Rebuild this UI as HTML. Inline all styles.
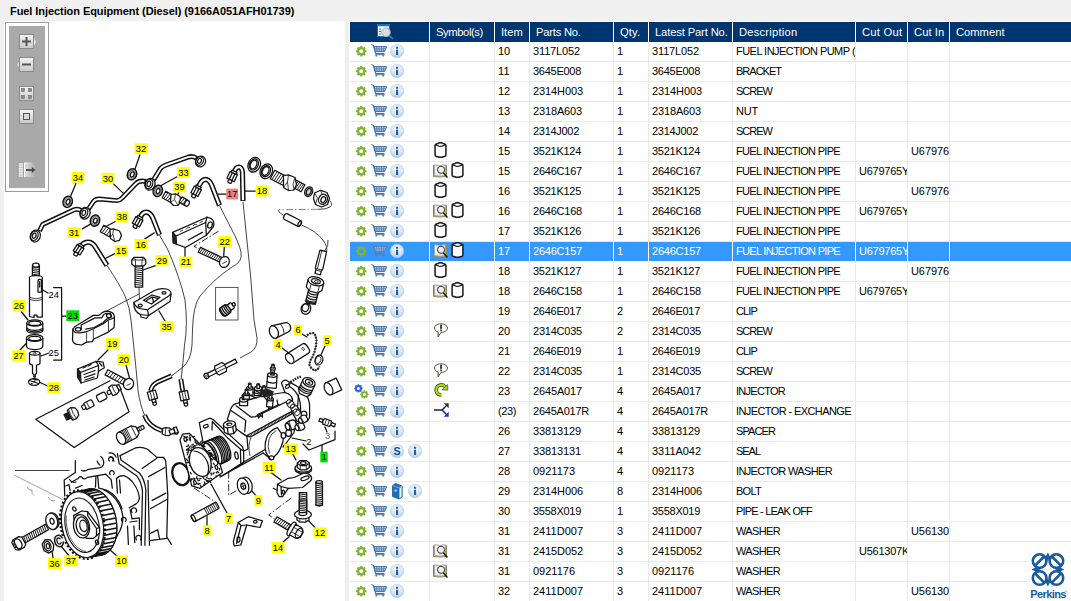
<!DOCTYPE html>
<html><head><meta charset="utf-8"><title>Fuel Injection Equipment (Diesel)</title>
<style>
*{box-sizing:border-box;margin:0;padding:0}
html,body{width:1071px;height:601px;overflow:hidden;background:#f0f0f0;font-family:"Liberation Sans",sans-serif;color:#000}
#title{position:absolute;left:10px;top:4px;font-size:11px;font-weight:bold;line-height:14px;white-space:nowrap;letter-spacing:-0.07px}
#lp{position:absolute;left:4px;top:21px;width:341px;height:580px;background:#fff;overflow:hidden}
#tb{position:absolute;left:1px;top:1px;width:44px;height:170px;border:1px solid #9a9a9a;background:#fff}
#tbi{position:absolute;left:3px;top:3px;width:36px;height:162px;background:#a9a9a9}
#rp{position:absolute;left:349px;top:21px;width:722px;height:580px;background:#fff;overflow:hidden}
#hd{position:absolute;left:350px;top:22px;width:721px;height:20px;background:#fff}
.h{position:absolute;top:0;height:20px;background:#00366f;color:#fff;font-size:11.2px;line-height:20px;padding-left:6px;white-space:nowrap;overflow:hidden}
.r{position:absolute;left:350px;width:721px;height:20px;border-bottom:1px solid #e9e9e9;font-size:11px;line-height:19px}
.c{position:absolute;top:0;height:19px;border-right:1px solid #e9e9e9;overflow:hidden;white-space:nowrap;padding-left:3px}
.c0{left:0;width:80px}.c1{left:80px;width:65px}.c2{left:145px;width:35px}.c3{left:180px;width:84px}.c4{left:264px;width:35px}
.c5{left:299px;width:84px}.c6{left:383px;width:123px}.c7{left:506px;width:52px}.c8{left:558px;width:42px}.c9{left:600px;width:121px;border-right:0}
.r.sel{background:#3399ff;color:#fff;border-bottom-color:#fff}
.r.sel .c{border-right-color:#fff}
.ic{position:absolute;overflow:visible}
.gear{left:6px;top:4px;width:10.500px;height:10.500px}
.gear2{left:4px;top:2px;width:15px;height:15px}
.cart{left:21px;top:2px;width:16px;height:13px}
.info{left:40px;top:2px;width:14px;height:14px}
.info.i2{left:58px}
.book2{left:42px;top:1px;width:11px;height:16px}
.cyl{top:0;width:13px;height:16px;left:4px}
.bk{top:2px;left:3px;width:15px;height:14px}
.bk + .cyl{left:21px}
.nt{top:1px;left:4px;width:14px;height:15px}
.ga{top:1px;left:4px;width:14px;height:14px}
.br{top:1px;left:4px;width:15px;height:14px}
#logo{position:absolute;left:1028px;top:542px;width:43px;height:59px;background:#fff}
</style></head><body>
<svg width="0" height="0" style="position:absolute">
<defs>
<radialGradient id="gi" cx="0.5" cy="0.35" r="0.7"><stop offset="0" stop-color="#f4f9fd"/><stop offset="0.6" stop-color="#d3e4f3"/><stop offset="1" stop-color="#9fc3e3"/></radialGradient>
<symbol id="i-gear" viewBox="0 0 11 11" overflow="visible"><circle cx="5.500" cy="5.500" r="3.200" fill="none" stroke="#7fb32f" stroke-width="2.300"/><g stroke="#7fb32f" stroke-width="2.200"><path d="M5.500 0v11M0 5.500h11M1.600 1.600l7.800 7.800M9.400 1.600l-7.800 7.800" stroke-dasharray="2 7 2 20"/></g></symbol>
<symbol id="i-gear2" viewBox="0 0 15 15" overflow="visible"><g transform="translate(0.300 0.300) scale(0.750)"><circle cx="5.500" cy="5.500" r="3.300" fill="none" stroke="#2a63d4" stroke-width="2.600"/><g stroke="#2a63d4" stroke-width="2.200"><path d="M5.500 0v11M0 5.500h11M1.600 1.600l7.800 7.800M9.400 1.600l-7.800 7.800" stroke-dasharray="2 7 2 20"/></g></g><g transform="translate(6.300 6.300) scale(0.750)"><circle cx="5.500" cy="5.500" r="3.200" fill="none" stroke="#7fb32f" stroke-width="2.300"/><g stroke="#7fb32f" stroke-width="2.200"><path d="M5.500 0v11M0 5.500h11M1.600 1.600l7.800 7.800M9.400 1.600l-7.800 7.800" stroke-dasharray="2 7 2 20"/></g></g></symbol>
<symbol id="i-cart" viewBox="0 0 16 13" overflow="visible"><path d="M0.300 0.600l2 0.700l2.300 8.200h8.800" fill="none" stroke="#3c6ea8" stroke-width="1.100"/><path d="M3 2.600h12.700l-2.200 5h-9z" fill="#dbe6f2" stroke="#3c6ea8" stroke-width="1"/><path d="M5.500 2.600l0.600 5M8 2.600l0.300 5M10.500 2.600v5M13 2.600l-0.800 5M3.500 4.300h11.500M4 6h10" stroke="#3c6ea8" stroke-width="0.700" fill="none"/><circle cx="5.300" cy="11.600" r="1.100" fill="#3f8fe0"/><circle cx="12.300" cy="11.600" r="1.100" fill="#3f8fe0"/><path d="M4.500 10.700h9" stroke="#3c6ea8" stroke-width="0.900"/></symbol>
<symbol id="i-carts" viewBox="0 0 16 13" overflow="visible"><path d="M0.300 0.600l2 0.700l2.300 8.200h8.800" fill="none" stroke="#5b7fa8" stroke-width="1.100"/><path d="M3 2.600h12.700l-2.200 5h-9z" fill="#a9c6e6" stroke="#5b7fa8" stroke-width="1"/><path d="M5.500 2.600l0.600 5M8 2.600l0.300 5M10.500 2.600v5M13 2.600l-0.800 5M3.500 4.300h11.500M4 6h10" stroke="#5b7fa8" stroke-width="0.700" fill="none"/><circle cx="5.300" cy="11.600" r="1.100" fill="#5b7fa8"/><circle cx="12.300" cy="11.600" r="1.100" fill="#5b7fa8"/><path d="M4.500 10.700h9" stroke="#5b7fa8" stroke-width="0.900"/></symbol>
<symbol id="i-info" viewBox="0 0 14 14" overflow="visible"><circle cx="7" cy="7" r="6.700" fill="url(#gi)" stroke="#b5d0ea" stroke-width="0.600"/><rect x="6" y="5.700" width="2.100" height="5.300" fill="#2d5c9e"/><rect x="6" y="2.800" width="2.100" height="2" fill="#2d5c9e"/></symbol>
<symbol id="i-s" viewBox="0 0 14 14" overflow="visible"><circle cx="7" cy="7" r="6.700" fill="url(#gi)" stroke="#b5d0ea" stroke-width="0.600"/><text x="7" y="10.800" font-size="10.500" font-weight="bold" text-anchor="middle" fill="#07529a" font-family="Liberation Sans, sans-serif">S</text></symbol>
<symbol id="i-book2" viewBox="0 0 11 16" overflow="visible"><path d="M0.500 2.500l3-2l6.500 2.500v11l-3 2l-6.500-2.500z" fill="#1f6db5" stroke="#175a9c" stroke-width="0.800"/><path d="M7 5v11l3-2v-11z" fill="#e8f0f8" stroke="#175a9c" stroke-width="0.700"/><path d="M0.500 2.500l6.500 2.500l3-2" fill="none" stroke="#9cc3ea" stroke-width="0.700"/><ellipse cx="3.800" cy="7.500" rx="1.700" ry="1.300" fill="#8bb6e0"/></symbol>
<symbol id="i-cyl" viewBox="0 0 13 16" overflow="visible"><path d="M1.100 3.200q0-0.900 1.300-1.200l1.600-0.400q0.300-0.900 2.500-0.900t2.500 0.900l1.600 0.400q1.300 0.300 1.300 1.200v10q0 0.900-1.300 1.200l-1.600 0.400q-0.600 0.500-2.500 0.500t-2.500-0.500l-1.600-0.400q-1.300-0.300-1.300-1.200z" fill="#fff" stroke="#1a1a1a" stroke-width="1.500"/><path d="M1.500 2.800q1.500 1 2.800 1q0.500 0.600 2.200 0.600t2.200-0.600q1.300 0 2.800-1" fill="none" stroke="#1a1a1a" stroke-width="1.200"/></symbol>
<symbol id="i-bk" viewBox="0 0 15 14" overflow="visible"><path d="M0.500 1.200v11.300l6.500 0.500l6.500-0.500v-11.300" fill="#ececec" stroke="#8f8640" stroke-width="1"/><path d="M1.600 0.800v10.800q3.500-0.300 5.400 1q1.900-1.300 5.400-1v-10.800q-3.500-0.300-5.400 1.200q-1.900-1.500-5.400-1.200z" fill="#f4f4f4" stroke="#8a8a8a" stroke-width="0.800"/><path d="M7 2v10.500" stroke="#aaa" stroke-width="0.600"/><circle cx="8" cy="5.800" r="3.600" fill="#f0f0f0" stroke="#2a2a2a" stroke-width="0.950"/><path d="M10.400 8.700l4 4.800" stroke="#1a1a1a" stroke-width="1.500"/></symbol>
<symbol id="i-nt" viewBox="0 0 14 15" overflow="visible"><path d="M7 0.800c3.600 0 6.400 1.800 6.400 4.300s-2.800 4.200-6.300 4.300l-3 4.400v-4.800c-2-0.600-3.600-2.200-3.600-3.900c0-2.500 2.900-4.300 6.500-4.300z" fill="#fff" stroke="#3a3520" stroke-width="0.900"/><rect x="6.200" y="1.700" width="1.700" height="4.200" fill="#222"/><rect x="6.200" y="6.600" width="1.700" height="1.600" fill="#222"/></symbol>
<symbol id="i-ga" viewBox="0 0 14 14" overflow="visible"><path d="M7.300 11.900a5 5 0 1 1 3.600-8.300" fill="none" stroke="#3c4a12" stroke-width="3.600" stroke-linecap="butt"/><path d="M7.300 11.900a5 5 0 1 1 3.600-8.300" fill="none" stroke="#a4dc16" stroke-width="2.200"/><path d="M8.200 6.900l5.700 0.200l-0.300-5.500z" fill="#a4dc16" stroke="#3c4a12" stroke-width="0.700"/></symbol>
<symbol id="i-br" viewBox="0 0 15 14" overflow="visible"><path d="M0 7h8l4.500-4.500" fill="none" stroke="#1c1c50" stroke-width="1.400"/><path d="M8 7l4.500 4.500" fill="none" stroke="#10208a" stroke-width="1.400"/><path d="M9.800 0.300h4.900v4.900z" fill="#333"/><path d="M14.700 8.800v4.900h-4.900z" fill="#0a32d0"/></symbol>

</defs>
</svg>
<div id="title">Fuel Injection Equipment (Diesel) (9166A051AFH01739)</div>
<div id="lp">
<svg id="dg" width="341" height="580" viewBox="4 21 341 580" style="position:absolute;left:0;top:0" font-family="Liberation Sans, sans-serif">
<style>.l{fill:none;stroke:#111;stroke-width:1.25;stroke-linejoin:round;stroke-linecap:round}.t{fill:none;stroke:#222;stroke-width:0.85}.w{fill:#fff;stroke:#111;stroke-width:1.25;stroke-linejoin:round}.k{fill:#222;stroke:none}.g{fill:none;stroke:#777;stroke-width:0.7}.d{fill:none;stroke:#111;stroke-width:0.9;stroke-dasharray:7 2 1.5 2}</style>
<path class="l" d="M139.9 155.0 L134.3 171.0"/>
<path class="l" d="M75.9 183.5 L69.9 197.9"/>
<path class="l" d="M113.5 183.9 L123.9 193.9"/>
<path class="l" d="M177.8 176.3 L159.8 186.3"/>
<path class="l" d="M178.8 192.3 L176.8 196.9"/>
<path class="l" d="M115.5 221.5 L106.3 226.3"/>
<path class="l" d="M82.3 228.9 L90.9 223.9"/>
<path class="l" d="M144.8 238.9 L154.2 232.9"/>
<path class="l" d="M218.0 194.0 L226.4 194.0"/>
<path class="l" d="M245.0 191.0 L255.5 191.0"/>
<path class="l" d="M48.0 293.0 L41.0 289.0"/>
<path class="l" d="M21.6 312.0 L28.0 320.0"/>
<path class="l" d="M115.0 253.6 L104.0 259.0"/>
<path class="l" d="M155.5 265.6 L143.0 270.0"/>
<path class="l" d="M165.0 321.0 L159.0 311.0"/>
<path class="l" d="M108.0 350.0 L98.0 360.0"/>
<path class="l" d="M20.0 350.0 L27.6 342.0"/>
<path class="l" d="M49.0 353.0 L41.0 356.0"/>
<path class="l" d="M185.0 257.0 L185.0 247.0"/>
<path class="l" d="M224.4 245.6 L223.6 258.0"/>
<path class="l" d="M302.0 334.0 L307.0 337.0"/>
<path class="l" d="M325.0 346.0 L320.0 357.0"/>
<path class="l" d="M282.0 348.0 L290.0 354.0"/>
<path class="l" d="M47.6 386.0 L39.0 382.0"/>
<path class="l" d="M126.0 365.0 L130.0 380.0"/>
<path class="l" d="M306.0 441.0 L292.0 438.0"/>
<path class="l" d="M293.0 454.4 L296.0 460.0"/>
<path class="l" d="M327.0 432.0 L325.0 427.0"/>
<path class="l" d="M53.0 558.0 L51.6 548.0"/>
<path class="l" d="M69.0 555.6 L60.0 545.0"/>
<path class="l" d="M117.0 556.0 L109.0 549.0"/>
<path class="l" d="M271.0 472.4 L281.0 480.0"/>
<path class="l" d="M256.0 495.6 L251.0 490.0"/>
<path class="l" d="M227.0 513.0 L211.0 484.0"/>
<path class="l" d="M207.0 525.6 L207.0 516.0"/>
<path class="l" d="M315.0 527.6 L308.0 520.0"/>
<path class="l" d="M283.0 542.0 L289.0 537.0"/>
<path class="l" d="M53.6 287.6 H61.6 V360 H53.6 M61.6 316 H66.4"/>
<path class="l" d="M303 444 L309 450 L335 439.6 V431 M322 445 V451.6"/>
<path d="M39.5 231 L42.6 224.5 L74 209.800 Q78 208.300 81.500 211" fill="none" stroke="#111" stroke-width="4.9" stroke-linejoin="round" stroke-linecap="butt"/>
<path d="M39.5 231 L42.6 224.5 L74 209.800 Q78 208.300 81.500 211" pathLength="100" stroke-dasharray="0 2 96 2" fill="none" stroke="#fff" stroke-width="1.9" stroke-linejoin="round" stroke-linecap="butt"/>
<path d="M88.200 209.500 L93.500 201.500 Q95.500 199 99.500 199 L117 200.600 Q119.800 200.600 122 198.200 L136 183.500 Q139.500 180 146 181.500" fill="none" stroke="#111" stroke-width="4.9" stroke-linejoin="round" stroke-linecap="butt"/>
<path d="M88.200 209.500 L93.500 201.500 Q95.500 199 99.500 199 L117 200.600 Q119.800 200.600 122 198.200 L136 183.500 Q139.500 180 146 181.500" pathLength="100" stroke-dasharray="0 2 96 2" fill="none" stroke="#fff" stroke-width="1.9" stroke-linejoin="round" stroke-linecap="butt"/>
<path d="M153.500 180 L160.500 168.500 Q162 166.500 166 165 L188 157.200 Q193.500 155.500 196.500 158.500" fill="none" stroke="#111" stroke-width="4.9" stroke-linejoin="round" stroke-linecap="butt"/>
<path d="M153.500 180 L160.500 168.500 Q162 166.500 166 165 L188 157.200 Q193.500 155.500 196.500 158.500" pathLength="100" stroke-dasharray="0 2 96 2" fill="none" stroke="#fff" stroke-width="1.9" stroke-linejoin="round" stroke-linecap="butt"/>
<g transform="translate(35.3 236.1) rotate(20)"><ellipse class="w" rx="5.0" ry="6.0" stroke-width="1.300"/><ellipse class="w" cx="-1" rx="3.6" ry="4.8" stroke-width="1"/><ellipse class="l" cx="-1.2" rx="1.8" ry="2.7" stroke-width="0.800"/></g>
<g transform="translate(85.0 213.2) rotate(20)"><ellipse class="w" rx="5.0" ry="6.0" stroke-width="1.300"/><ellipse class="w" cx="-1" rx="3.6" ry="4.8" stroke-width="1"/><ellipse class="l" cx="-1.2" rx="1.8" ry="2.7" stroke-width="0.800"/></g>
<g transform="translate(150.0 184.3) rotate(20)"><ellipse class="w" rx="5.0" ry="6.0" stroke-width="1.300"/><ellipse class="w" cx="-1" rx="3.6" ry="4.8" stroke-width="1"/><ellipse class="l" cx="-1.2" rx="1.8" ry="2.7" stroke-width="0.800"/></g>
<g transform="translate(200.5 161.5) rotate(30)"><ellipse class="w" rx="5.0" ry="5.5" stroke-width="1.300"/><ellipse class="w" cx="-1" rx="3.6" ry="4.4" stroke-width="1"/><ellipse class="l" cx="-1.2" rx="1.8" ry="2.5" stroke-width="0.800"/></g>
<g transform="translate(132.0 174.3) rotate(20)"><ellipse rx="4.6" ry="5.7" fill="#d4d4d4" stroke="#111" stroke-width="1.500"/><ellipse rx="3.3" ry="4.1" fill="none" stroke="#555" stroke-width="0.700"/><ellipse cx="0.3" rx="1.8" ry="2.6" fill="#fff" stroke="#111" stroke-width="1.300"/></g>
<g transform="translate(67.7 201.8) rotate(20)"><ellipse rx="4.6" ry="5.7" fill="#d4d4d4" stroke="#111" stroke-width="1.500"/><ellipse rx="3.3" ry="4.1" fill="none" stroke="#555" stroke-width="0.700"/><ellipse cx="0.3" rx="1.8" ry="2.6" fill="#fff" stroke="#111" stroke-width="1.300"/></g>
<g transform="translate(157.8 190.9) rotate(20)"><ellipse rx="4.6" ry="5.7" fill="#d4d4d4" stroke="#111" stroke-width="1.500"/><ellipse rx="3.3" ry="4.1" fill="none" stroke="#555" stroke-width="0.700"/><ellipse cx="0.3" rx="1.8" ry="2.6" fill="#fff" stroke="#111" stroke-width="1.300"/></g>
<g transform="translate(95.0 220.6) rotate(20)"><ellipse rx="4.6" ry="5.7" fill="#d4d4d4" stroke="#111" stroke-width="1.500"/><ellipse rx="3.3" ry="4.1" fill="none" stroke="#555" stroke-width="0.700"/><ellipse cx="0.3" rx="1.8" ry="2.6" fill="#fff" stroke="#111" stroke-width="1.300"/></g>
<path class="w" d="M100.2 231.8 L109.2 236.8 L112.8 230.2 L103.8 225.2 Z"/>
<path class="t" style="stroke-width:0.95;stroke:#111" d="M102.0 232.8 L106.5 226.7 M104.2 234.0 L108.8 228.0 M106.5 235.3 L111.0 229.2"/>
<path class="w" d="M110 229.500 L113.500 228.800 L119.500 231 L121.500 235.500 L119.500 240.300 L115 241.500 L110.500 238.500 Z"/>
<path class="t" d="M113.500 228.800 L112.800 234 L115 241.500 M112.800 234 L110 238"/>
<path class="w" d="M162.2 197.8 L170.2 202.3 L173.8 195.7 L165.8 191.2 Z"/>
<path class="t" style="stroke-width:0.95;stroke:#111" d="M163.7 198.6 L168.3 192.6 M165.7 199.8 L170.3 193.7 M167.7 200.9 L172.3 194.9"/>
<path class="w" d="M171 194.500 L175.500 193.800 L180 196.500 L180.800 201.500 L178 205.300 L173.500 205.500 L170.500 202.500 Z"/>
<path class="t" d="M175.500 193.800 L174.500 199.500 L178 205.300 M174.500 199.500 L170.500 202.500"/>
<path class="w" d="M179.0 202.1 L185.0 205.6 L188.0 200.4 L182.0 196.9 Z"/>
<path class="t" style="stroke-width:0.95;stroke:#111" d="M180.6 203.0 L184.4 198.3 M182.6 204.2 L186.4 199.5"/>
<ellipse class="w" cx="187" cy="203.300" rx="2.200" ry="3" transform="rotate(25 187 203.300)"/>
<path class="t" d="M219.500 205.500 L231 228 Q239 243 241 252 Q243 262 232 267 Q214 279 200 296 Q193 306 192.500 330 L192 345 Q191 360 183 367 L171.700 375.800"/>
<path class="t" d="M243 202 L247.500 246 L250.500 275 L254 320 L257 338 Q257.500 348 251 352 L240 358"/>
<path class="t" d="M159.500 235 L168 250 Q180 278 185 300 Q188 325 184.500 345 L183 362 L181 380"/>
<path class="t" d="M107 265.500 L113.600 275.600 Q122 289 125.300 296.600 Q130 308 131 320 L133.400 343 L135.800 366.500 L138 390 Q140 405 144.500 415"/>
<path d="M198.500 187 Q201.500 179 206.500 179.500 Q210 180.500 212 186 L219.500 205.500" fill="none" stroke="#111" stroke-width="5.2" stroke-linejoin="round" stroke-linecap="butt"/>
<path d="M198.500 187 Q201.500 179 206.500 179.500 Q210 180.500 212 186 L219.500 205.500" pathLength="100" stroke-dasharray="0 2 96 2" fill="none" stroke="#fff" stroke-width="2.2" stroke-linejoin="round" stroke-linecap="butt"/>
<g transform="translate(196.0 191.5) rotate(28)"><rect class="w" x="-4" y="-4" width="8" height="7.500" stroke-width="1.300"/><path class="l" d="M-1.400 -4V3.500 M1.400 -4V3.500" stroke-width="0.900"/><rect class="w" x="-2" y="3.500" width="4" height="3.200" rx="1.400" stroke-width="1.200"/><rect class="w" x="-2.800" y="-6" width="5.600" height="2" stroke-width="1.100"/></g>
<path d="M234 172.500 Q236 166 240 167.300 Q242.500 168.500 242.500 174 L243 201" fill="none" stroke="#111" stroke-width="5.2" stroke-linejoin="round" stroke-linecap="butt"/>
<path d="M234 172.500 Q236 166 240 167.300 Q242.500 168.500 242.500 174 L243 201" pathLength="100" stroke-dasharray="0 2 96 2" fill="none" stroke="#fff" stroke-width="2.2" stroke-linejoin="round" stroke-linecap="butt"/>
<g transform="translate(232.0 176.8) rotate(25)"><rect class="w" x="-4" y="-4" width="8" height="7.500" stroke-width="1.300"/><path class="l" d="M-1.400 -4V3.500 M1.400 -4V3.500" stroke-width="0.900"/><rect class="w" x="-2" y="3.500" width="4" height="3.200" rx="1.400" stroke-width="1.200"/><rect class="w" x="-2.800" y="-6" width="5.600" height="2" stroke-width="1.100"/></g>
<path d="M140 218 Q142.500 211.500 147.500 212.300 Q151 213.500 153 218.500 L159.500 235" fill="none" stroke="#111" stroke-width="5.2" stroke-linejoin="round" stroke-linecap="butt"/>
<path d="M140 218 Q142.500 211.500 147.500 212.300 Q151 213.500 153 218.500 L159.500 235" pathLength="100" stroke-dasharray="0 2 96 2" fill="none" stroke="#fff" stroke-width="2.2" stroke-linejoin="round" stroke-linecap="butt"/>
<g transform="translate(137.5 222.0) rotate(28)"><rect class="w" x="-4" y="-4" width="8" height="7.500" stroke-width="1.300"/><path class="l" d="M-1.400 -4V3.500 M1.400 -4V3.500" stroke-width="0.900"/><rect class="w" x="-2" y="3.500" width="4" height="3.200" rx="1.400" stroke-width="1.200"/><rect class="w" x="-2.800" y="-6" width="5.600" height="2" stroke-width="1.100"/></g>
<path d="M81 246 Q84.500 241.300 90 242.300 Q93.500 243.500 96 248 L107 265.500" fill="none" stroke="#111" stroke-width="5.2" stroke-linejoin="round" stroke-linecap="butt"/>
<path d="M81 246 Q84.500 241.300 90 242.300 Q93.500 243.500 96 248 L107 265.500" pathLength="100" stroke-dasharray="0 2 96 2" fill="none" stroke="#fff" stroke-width="2.2" stroke-linejoin="round" stroke-linecap="butt"/>
<g transform="translate(78.5 249.8) rotate(32)"><rect class="w" x="-4" y="-4" width="8" height="7.500" stroke-width="1.300"/><path class="l" d="M-1.400 -4V3.500 M1.400 -4V3.500" stroke-width="0.900"/><rect class="w" x="-2" y="3.500" width="4" height="3.200" rx="1.400" stroke-width="1.200"/><rect class="w" x="-2.800" y="-6" width="5.600" height="2" stroke-width="1.100"/></g>
<g transform="translate(254.2 164.7) rotate(25)"><ellipse class="w" rx="6" ry="7.600" stroke-width="1.200"/><ellipse class="w" rx="4.300" ry="5.800" cx="-0.400" stroke-width="0.800"/><ellipse class="w" rx="3" ry="4.500" cx="-0.700" stroke-width="1"/></g>
<g transform="translate(266.3 171.3) rotate(25)"><ellipse class="w" rx="6" ry="7.600" stroke-width="1.200"/><ellipse class="w" rx="4.300" ry="5.800" cx="-0.400" stroke-width="0.800"/><ellipse class="w" rx="3" ry="4.500" cx="-0.700" stroke-width="1"/></g>
<path class="w" d="M270.3 178.7 L282.8 185.2 L287.2 176.8 L274.7 170.3 Z"/>
<path class="t" style="stroke-width:0.95;stroke:#111" d="M271.9 179.6 L277.2 171.6 M274.0 180.7 L279.3 172.7 M276.1 181.7 L281.4 173.8 M278.2 182.8 L283.5 174.8 M280.3 183.9 L285.6 175.9"/>
<path class="w" d="M292.1 187.0 L301.1 191.8 L304.9 184.8 L295.9 180.0 Z"/>
<path class="t" style="stroke-width:0.95;stroke:#111" d="M293.5 187.8 L298.1 181.2 M295.3 188.7 L299.9 182.1 M297.1 189.7 L301.7 183.1 M298.9 190.6 L303.5 184.0"/>
<path class="w" d="M283.500 175.500 L288.500 174.800 L295 177.500 L296.500 184.500 L294 190 L288.500 190.500 L283.500 187.500 Z"/>
<path class="t" d="M288.500 174.800 L287.500 182 L288.500 190.500 M287.500 182 L283.500 187.500 M295 177.500 L293 184 L294 190"/>
<g transform="translate(308.700 191.700) rotate(25)"><ellipse class="w" rx="3.800" ry="5" stroke-width="1.100"/><ellipse class="l" rx="2.300" ry="3.500" stroke-width="1.200" style="fill:#ccc"/></g>
<path class="w" d="M314.500 193 L320.500 190.300 L327 192.500 L329.500 198.500 L327.500 204.500 L321.500 207 L315.500 204.500 L313.500 198.500 Z"/>
<ellipse class="w" cx="323" cy="199.300" rx="4.300" ry="5.200" transform="rotate(25 323 199.300)"/>
<ellipse class="l" cx="323.400" cy="199.500" rx="2.200" ry="3" transform="rotate(25 323 199.300)"/>
<path class="t" d="M314.500 193 L317.500 198 L315.500 204.500 M320.500 190.300 L322 194"/>
<path class="t" d="M329.500 200.500 Q333.500 204 330 207 Q326 209.500 318 209.300"/>
<path d="M318 209.300 L279 209.700" fill="none" stroke="#444" stroke-width="0.650" stroke-dasharray="7 2 1.500 2"/>
<path class="t" d="M279 209.700 Q276.500 210.500 283.500 215.500"/>
<g transform="translate(292.500 220) rotate(27)"><rect class="w" x="-9.300" y="-3.200" width="18.600" height="6.400" rx="2"/><ellipse class="l" cx="8" cy="0" rx="1.300" ry="3"/></g>
<path class="t" d="M301.500 225 Q316 231 323 240 Q328 247 326.500 252"/>
<path class="w" d="M32.4 265.5 L32.4 276.5 L39.4 276.5 L39.4 265.5 Z"/>
<path class="t" style="stroke-width:0.95;stroke:#111" d="M32.4 266.8 L39.4 267.8 M32.4 268.7 L39.4 269.7 M32.4 270.5 L39.4 271.5 M32.4 272.3 L39.4 273.3 M32.4 274.2 L39.4 275.2"/>
<ellipse class="w" cx="35.900" cy="265.200" rx="3.300" ry="2"/>
<path class="w" d="M29.500 277.500 Q29.500 275.500 35.900 275.500 Q42.300 275.500 42.300 277.500 L42.300 317 L37 317 L37 315 L34 315 L34 317.500 L29.500 316.500 Z"/>
<path class="t" d="M29.500 297.500 Q35.900 300 42.300 297.500 M29.500 299.500 Q35.900 302 42.300 299.500"/>
<path class="l" d="M38 280.500 Q38 279.300 39.800 279.300 Q41.500 279.300 41.500 280.500 L41.500 292 L38 292 Z M39.700 281.500 V287"/>
<path class="w" d="M26.800 323 L26.800 330 Q26.800 333.200 34.800 333.200 Q42.800 333.200 42.800 330 L42.800 323"/>
<ellipse class="w" cx="34.800" cy="323" rx="8" ry="3.200"/>
<ellipse class="l" cx="34.800" cy="323.300" rx="6" ry="2.200"/>
<path class="l" d="M26.800 328.500 Q34.800 332.300 42.800 328.500 M26.800 330 Q34.800 334 42.800 330"/>
<path class="w" d="M26.500 338 L26.500 346 Q26.500 349.500 34.700 349.500 Q42.800 349.500 42.800 346 L42.800 338"/>
<ellipse class="w" cx="34.700" cy="338" rx="8.200" ry="3.300"/>
<ellipse class="l" cx="34.700" cy="338.400" rx="6" ry="2.100"/>
<path class="w" d="M29.500 353.300 L29.500 363 Q29.500 364.500 32.500 365 L32.500 373.500 L33.800 374.500 L33.800 377 L35.300 377 L35.300 374.500 L36.500 373.500 L36.500 365 Q40 364.500 40 363 L40 353.300"/>
<ellipse class="w" cx="34.750" cy="353.300" rx="5.250" ry="1.900"/>
<ellipse class="t" cx="34.750" cy="353.300" rx="1.500" ry="0.800"/>
<ellipse class="w" cx="34.100" cy="382" rx="5.600" ry="3.400" stroke-width="1.600"/>
<path class="l" d="M29.500 380.500 L38.500 383.500 M31 384 L35 381 M33 379 L37 380"/>
<path class="w" d="M131.800 260 L134 257.300 L143.500 257.300 L145.800 260 L145.800 264 L143.500 266 L134 266 L131.800 264 Z"/>
<path class="t" d="M134 257.300 L135.500 260 L142 260 L143.500 257.300 M135.500 260 V266 M142 260 V266 M131.800 260 L135.500 260 M142 260 L145.800 260"/>
<path class="w" d="M135.1 266.0 L135.1 287.0 L142.7 287.0 L142.7 266.0 Z"/>
<path class="t" style="stroke-width:0.95;stroke:#111" d="M135.1 267.6 L142.7 268.6 M135.1 269.7 L142.7 270.7 M135.1 271.8 L142.7 272.8 M135.1 273.9 L142.7 274.9 M135.1 276.0 L142.7 277.0 M135.1 278.1 L142.7 279.1 M135.1 280.2 L142.7 281.2 M135.1 282.3 L142.7 283.3 M135.1 284.4 L142.7 285.4"/>
<path class="t" d="M139 287 L139.700 307"/>
<path class="t" d="M106.600 311 L139.300 293.800"/>
<path class="w" d="M133.800 302.500 L154.400 290.500 Q160 288 166.500 289 Q171.500 290.500 171 294.300 L170 301.500 L148.600 315.500 L140.400 314.500 Q135.500 312 134.300 307.500 Z"/>
<path class="l" d="M133.800 302.500 Q135 306.500 139.500 308.500 L147.500 309.800 L169.500 295.500 Q170.500 293.500 171 294.300 M147.500 309.800 L148.600 315.500"/>
<path class="l" d="M143.500 300.300 L152 295 L160 297.300 L151.500 304 Z"/>
<path class="l" d="M146.500 300.500 L152.300 297 L157.500 298.300 M152.300 297 L153.500 302"/>
<ellipse class="l" cx="140.200" cy="305.600" rx="2" ry="1.400"/>
<ellipse class="l" cx="164" cy="292.800" rx="2" ry="1.300"/>
<path class="l" d="M140.400 314.500 L141 317 L146.500 318.500 L148.600 315.500"/>
<path class="w" d="M72.900 329.200 Q74 326.500 77.500 325 L80.400 323.300 L93.300 315.400 L99.100 315.400 L102.400 312.500 Q105 311 108.300 311.300 Q112.500 312 113.700 314.200 L114.500 317.500 L114.100 327.500 L108.300 332.100 L93.300 339.200 L92.500 341.700 L86.600 342.100 L81.600 345 L75.800 344.200 Q72.800 343 72.500 340 Z"/>
<path class="l" d="M72.900 329.200 Q73 331.500 76 332.600 L80 332.900 L86.600 331.700 L93.300 328.700 L103.300 323.700 L108.300 320 L114.100 317.900"/>
<path class="l" d="M81.200 329.500 L81.200 325 L95 317.900 L101.600 317.900 L104.100 314.200 Q107 312.800 110.400 313.700 L111.600 316.700 L106.600 319.200 L103.300 322.500 L94.100 327.500 L85.800 329.200"/>
<path class="t" d="M86.600 332.500 V342 M93.300 329.200 V339 M108.500 320.400 V332"/>
<ellipse class="l" cx="78.200" cy="329.300" rx="2.800" ry="1.800" stroke-width="0.900"/>
<ellipse class="l" cx="108.800" cy="315.700" rx="2.300" ry="1.800" stroke-width="0.900"/>
<path class="w" d="M77.500 369 L96 361.400 L103 362 L104.300 367.700 L98.500 371.200 L97.300 378 L81 383 L77.500 377 Z"/>
<path class="l" d="M77.500 369 L80.500 372.500 L98.500 365.500 L96 361.400 M80.500 372.500 L81 383 M98.500 365.500 L98.500 371.200 M84 374.500 L95 370.500 M84.500 377.500 L95 373.800 M85 380 L94 377"/>
<path class="l" d="M83 368 L86 366.500 M88 366 L91 364.500 M99.500 363 L102 366"/>
<path class="k" d="M77.500 369 L80.500 372.500 L81 383 L77.500 377 Z"/>
<path class="w" d="M105.1 374.9 L122.6 384.3 L125.4 379.1 L107.9 369.7 Z"/>
<path class="t" style="stroke-width:0.95;stroke:#111" d="M107.2 376.0 L110.8 371.3 M109.7 377.3 L113.3 372.7 M112.2 378.6 L115.8 374.0 M114.7 380.0 L118.3 375.4 M117.2 381.3 L120.8 376.7 M119.7 382.7 L123.3 378.0"/>
<ellipse class="w" cx="128.500" cy="384" rx="5" ry="5.700" transform="rotate(25 128.500 384)" stroke-width="1.300"/>
<path class="t" d="M126.500 385.500 L131 383.500"/>
<path class="w" d="M172.600 232.400 L207 217.200 L211 218.500 Q215 221 213.500 226.500 L206.300 235.300 L185.400 247.500 L173 242.800 Z"/>
<path class="l" d="M172.600 232.400 L176 236 L205.700 222.500 L207 217.200 M176 236 L176.500 244.200 M205.700 222.500 L206.300 235.300"/>
<path class="k" d="M172.600 232.400 L176 236 L176.500 244.200 L173 242.800 Z"/>
<path class="l" d="M188.300 240 L202.300 232.400"/>
<path class="t" d="M180 231.500 L183 230 M186 229.500 Q187 227 190 227.500 M193 226 Q194 223.500 197 224.500 M199.500 223 L203 221"/>
<ellipse class="l" cx="210" cy="225" rx="2.200" ry="3.200" transform="rotate(20 210 225)"/>
<path class="d" d="M218.500 231.200 L194 246.300 L200 249.800"/>
<path class="w" d="M198.2 252.2 L219.4 262.0 L221.6 257.2 L200.4 247.4 Z"/>
<path class="t" style="stroke-width:0.95;stroke:#111" d="M199.7 252.8 L202.8 248.5 M201.6 253.7 L204.7 249.4 M203.5 254.6 L206.6 250.3 M205.5 255.5 L208.6 251.2 M207.4 256.4 L210.5 252.1 M209.3 257.3 L212.4 253.0 M211.2 258.2 L214.3 253.9 M213.2 259.1 L216.3 254.8 M215.1 260.0 L218.2 255.7 M217.0 260.9 L220.1 256.6"/>
<ellipse class="w" cx="224.400" cy="262" rx="4.800" ry="5.600" transform="rotate(25 224.400 262)"/>
<path class="t" d="M222.300 263.500 L227 261.500"/>
<rect x="215.600" y="287.400" width="22.400" height="32.600" fill="none" stroke="#444" stroke-width="0.900"/>
<g transform="translate(226.500 309.500) rotate(-35) scale(1.080)"><rect class="w" x="-6" y="-4.500" width="9" height="9" rx="3"/><path class="l" d="M-4.300 -4.300 Q-6 0 -4.300 4.300 M-2.300 -4.500 Q-4 0 -2.300 4.500 M-0.300 -4.500 Q-2 0 -0.300 4.500 M1.500 -4.500 Q0 0 1.500 4.500"/><rect class="w" x="3" y="-3" width="4" height="6" rx="1"/><rect class="w" x="7" y="-1.500" width="2.500" height="3" rx="1"/></g>
<path class="t" d="M328 240 Q329 246 324.500 251"/>
<g transform="translate(320.500 262.500) rotate(13.500)"><path class="w" d="M-3.400 -12 L3.400 -12 L3.800 6 L2.800 8 L2.800 12 L-2.800 12 L-2.800 8 L-3.800 6 Z"/><path class="t" d="M-3.500 7 L3.500 7 M-2.500 8.500 L2.500 8.500 M-1.500 -12 V7"/></g>
<g transform="translate(313.500 291) rotate(14)"><path class="w" d="M-5 0 L5 0 L5 12 L-5 12 Z"/><path class="l" d="M-5 2.500 Q0 5 5 2.500 M-5 5 Q0 7.500 5 5 M-5 7.500 Q0 10 5 7.500 M-5 10 Q0 12.500 5 10 M-5 12 Q0 14.500 5 12"/><path class="w" d="M-8 -10 L-8 -2.500 L-4 1 L4.500 1 L8 -2.500 L8 -10 Z"/><path class="t" d="M-4 -6 L-4 1 M4.500 -6 L4.500 1"/><ellipse class="w" cx="0" cy="-10" rx="8" ry="4.300"/><ellipse class="l" cx="0" cy="-10" rx="4.500" ry="2.400"/><ellipse class="t" cx="0.5" cy="-9.800" rx="2" ry="1.100"/></g>
<g transform="translate(305.900 308.800) rotate(20)"><ellipse class="w" rx="4.800" ry="5.500" stroke-width="1.200"/><ellipse class="l" cx="-0.800" cy="-0.800" rx="3.300" ry="3.800"/></g>
<g transform="translate(279.500 330) rotate(-20)"><path class="w" d="M-6 -6.500 L7 -5 Q11.500 -4.500 11.500 0 Q11.500 4.500 7 5 L-6 6.500 Z"/><ellipse class="w" cx="-6" cy="0" rx="4.300" ry="6.500" stroke-width="1.900"/><path class="t" d="M3 -5.500 Q5 0 3 5.500"/></g>
<g transform="translate(297.700 353.500) rotate(-32)"><path class="w" d="M-9.500 -5.500 L9.500 -5.500 Q12 -5.500 12 0 Q12 5.500 9.500 5.500 L-9.500 5.500 Z"/><ellipse class="w" cx="-9.500" cy="0" rx="3.600" ry="5.500" stroke-width="1.300"/><ellipse class="t" cx="7" cy="-1" rx="1" ry="1.600"/></g>
<path d="M307.0 335.3 L310.0 333.5 L313.5 333.0 L315.5 335.5 L316.5 340.0 L316.0 346.0 L314.5 352.0 L312.5 357.0 L310.0 361.0 L309.5 365.0 L311.5 368.5 L314.5 370.5 L317.5 369.5 L319.5 366.5" fill="none" stroke="#222" stroke-width="2.200" stroke-dasharray="1.600 1.300" stroke-linejoin="round"/>
<path d="M307.0 335.3 L310.0 333.5 L313.5 333.0 L315.5 335.5 L316.5 340.0 L316.0 346.0 L314.5 352.0 L312.5 357.0 L310.0 361.0 L309.5 365.0 L311.5 368.5 L314.5 370.5 L317.5 369.5 L319.5 366.5" fill="none" stroke="#222" stroke-width="0.700"/>
<g transform="translate(318.900 360.100) rotate(20)"><ellipse class="w" rx="3.800" ry="5" stroke-width="1.100"/><ellipse class="t" cx="-0.700" rx="2.600" ry="3.800"/></g>
<g transform="translate(333.500 386.500) rotate(-25)"><path class="w" d="M-5.500 -6.500 L6 -6.500 L6 6.500 L-5.500 6.500 Z"/><ellipse class="w" cx="-5.500" cy="0" rx="3.800" ry="6.500" stroke-width="1.300"/></g>
<path class="l" d="M110 380.800 L35.800 419.200 L74.200 447.500 L129 411.700 L120.700 390"/>
<g transform="translate(72 414) rotate(-27)"><rect class="w" x="-7.500" y="-3" width="5" height="6"/><path class="l" d="M-6.300 -3 V3 M-5 -3 V3 M-3.700 -3 V3"/><path class="w" d="M-2.500 -5.500 L2 -6.200 L5.500 -4 L6.500 0 L5.500 4 L2 6.200 L-2.500 5.500 Z"/><path class="t" d="M2 -6.200 Q0.500 0 2 6.200 M-1 -5.800 Q-2.200 0 -1 5.800"/></g>
<g transform="translate(88 405) rotate(-27)"><rect class="w" x="-3.500" y="-3.500" width="9" height="7" rx="1.500"/><rect class="w" x="-6.500" y="-2.200" width="3.500" height="4.400" rx="1"/><path class="t" d="M0 -3.500 V3.500"/></g>
<g transform="translate(101.700 397) rotate(-27)"><rect class="w" x="-4.800" y="-3.600" width="9.600" height="7.200" rx="1.800"/></g>
<g transform="translate(113.300 390.200) rotate(-27)"><rect class="w" x="-6.500" y="-2" width="4" height="4" rx="1.500"/><path class="w" d="M-3 -4.500 L1 -5.200 L4.500 -3.500 L5.500 0 L4.500 3.500 L1 5.200 L-3 4.500 Z"/><path class="t" d="M1 -5.200 Q0 0 1 5.200"/><rect class="w" x="5" y="-2.800" width="2.500" height="5.600"/></g>
<g transform="translate(129.500 434) rotate(-27)"><rect class="w" x="9" y="-1.800" width="7" height="3.600" rx="1"/><path class="t" d="M11 -1.800 V1.800 M13 -1.800 V1.800"/><path class="w" d="M-9.500 -6.500 L5 -6.500 L9 -3.500 L9 3.500 L5 6.500 L-9.500 6.500 Z"/><path class="t" d="M-8 -6.500 V6.500 M-6.500 -6.500 V6.500 M-5 -6.500 V6.500 M-3.500 -6.500 V6.500 M-2 -6.500 V6.500 M-0.500 -6.500 V6.500 M5 -6.500 V6.500"/><ellipse class="w" cx="-9.500" cy="0" rx="4" ry="6.500" stroke-width="1.300"/></g>
<path d="M171.700 375.800 L157 382.300 Q152.500 384.500 151 389.500 L150.500 391" fill="none" stroke="#111" stroke-width="4.8" stroke-linejoin="round" stroke-linecap="butt"/>
<path d="M171.700 375.800 L157 382.300 Q152.500 384.500 151 389.500 L150.500 391" pathLength="100" stroke-dasharray="0 2 96 2" fill="none" stroke="#fff" stroke-width="1.8" stroke-linejoin="round" stroke-linecap="butt"/>
<g transform="translate(152.500 395.500) rotate(-15)"><rect class="w" x="-4.200" y="-4.500" width="8.400" height="8.500"/><path class="t" d="M-1.400 -4.500 V4 M1.400 -4.500 V4"/><rect class="w" x="-1.800" y="4" width="3.600" height="3.200"/><ellipse class="w" cx="0" cy="8.500" rx="1.800" ry="1.600"/></g>
<path d="M180.800 379 L182.800 391" fill="none" stroke="#111" stroke-width="4.8" stroke-linejoin="round" stroke-linecap="butt"/>
<path d="M180.800 379 L182.800 391" pathLength="100" stroke-dasharray="0 2 96 2" fill="none" stroke="#fff" stroke-width="1.8" stroke-linejoin="round" stroke-linecap="butt"/>
<g transform="translate(184.200 396) rotate(-12)"><rect class="w" x="-4.200" y="-4.800" width="8.400" height="9"/><path class="t" d="M-1.400 -4.800 V4.200 M1.400 -4.800 V4.200"/><rect class="w" x="-1.800" y="4.200" width="3.600" height="3"/><ellipse class="w" cx="0" cy="8.700" rx="1.800" ry="1.600"/></g>
<path d="M144.500 415 Q148 426 162 430.800" fill="none" stroke="#111" stroke-width="4.8" stroke-linejoin="round" stroke-linecap="butt"/>
<path d="M144.500 415 Q148 426 162 430.800" pathLength="100" stroke-dasharray="0 2 96 2" fill="none" stroke="#fff" stroke-width="1.8" stroke-linejoin="round" stroke-linecap="butt"/>
<g transform="translate(168 431.700) rotate(5)"><path class="w" d="M-5.500 -2.800 L-2.500 -3.800 L1.500 -3.800 L3 -2 L3 2 L1.500 3.800 L-2.500 3.800 L-5.500 2.800 Z"/><rect class="w" x="3" y="-1.500" width="4.500" height="3"/><ellipse class="w" cx="8.500" cy="0" rx="1.500" ry="1.800"/><path class="t" d="M-2.500 -3.800 V3.800"/></g>
<g transform="translate(221 368.500) rotate(-27)"><rect class="w" x="-15" y="-1.900" width="32" height="3.800"/><path class="w" d="M-4.500 -5 L3.500 -5 L4.800 -2.800 L4.800 2.800 L3.500 5 L-4.500 5 L-5.800 2.800 L-5.800 -2.800 Z" stroke-width="1.400"/><path class="t" d="M-5.500 -1.500 H4.500 M-5.500 1.500 H4.500"/><ellipse class="w" cx="-16.500" cy="0" rx="2.200" ry="2.800"/><ellipse class="t" cx="-16.500" cy="0" rx="0.900" ry="1.200"/></g>
<g transform="translate(173.500 431) rotate(-20)"><rect class="w" x="-4" y="-2.200" width="5" height="4.400"/><rect class="w" x="1" y="-3" width="3" height="6"/></g>
<path class="w" d="M199.300 422.600 L209.600 418.200 L212.800 419.300 L242.600 446.900 L243.600 451 L243.800 462 L221 476.500 L209 464 L203.100 442.600 Z"/>
<path class="l" d="M212.300 421.500 L221 430.700 L227.400 437.700 L240.400 449 L243.600 451 M240.400 449 L240.800 463.500 M212.300 421.500 L212 430"/>
<rect class="l" x="203.300" y="424.800" width="5" height="2.800" rx="1.400" transform="rotate(-20 205.800 426.200)"/>
<ellipse class="l" cx="236.500" cy="455.500" rx="1.600" ry="3.600" transform="rotate(-12 236.500 455.500)"/>
<g transform="translate(208.500 455) rotate(-24)"><path class="w" d="M0 -13.500 L16.500 -13 A5.500 13 0 0 1 16.500 13 L0 13.500 Z"/><ellipse class="w" cx="0" cy="0" rx="6" ry="13.500" stroke-width="1.300"/><ellipse class="l" cx="1.500" cy="0" rx="5.300" ry="12"/><path class="l" d="M6.5 -13.200 A5.500 13.200 0 0 1 6.5 13.200"/><path class="l" d="M8.2 -13.200 A5.500 13.200 0 0 1 8.2 13.200"/><path class="l" d="M9.9 -13.200 A5.500 13.200 0 0 1 9.9 13.200"/><path class="l" d="M11.6 -13.200 A5.500 13.200 0 0 1 11.6 13.200"/><path class="l" d="M13.3 -13.200 A5.500 13.200 0 0 1 13.3 13.200"/><path class="l" d="M15.0 -13.200 A5.500 13.200 0 0 1 15.0 13.200"/><path class="l" d="M3 -13.400 A5.500 13.300 0 0 1 3 13.400" stroke-width="0.900"/></g>
<ellipse cx="180.800" cy="474.200" rx="8.300" ry="11.200" transform="rotate(-18 180.800 474.200)" fill="none" stroke="#111" stroke-width="2.300"/>
<path class="w" d="M182.500 434.200 L189.200 433.300 L220 464.200 L222.500 472.500 L200 488.300 L191.700 485.800 L180 440 Z"/>
<path class="l" d="M191.4 447.2 l2.0 -0.1 M214.5 459.8 l0.6 -1.4 M206.4 480.1 l0.1 1.0 M193.1 436.6 l1.5 -0.1 M209.8 480.7 l0.9 1.7 M196.8 476.6 l-0.2 1.7 M186.4 446.3 l1.9 -0.3 M204.4 482.0 l0.7 1.7 M217.2 464.6 l0.9 -1.2 M214.3 464.8 l-0.9 -1.7 M197.4 442.8 l-0.8 1.1 M209.7 452.2 l1.5 1.9 M201.2 486.9 l-0.8 -1.7 M193.6 484.9 l1.6 -0.5 M218.6 461.4 l-0.3 0.9 M190.5 450.7 l1.9 0.1 M193.4 446.6 l1.2 -1.0 M188.5 457.6 l0.8 -1.6 M214.3 457.8 l1.4 -1.3 M216.4 458.5 l-1.1 -1.5 M202.2 444.9 l1.2 1.4 M188.3 449.5 l1.2 0.6 M186.2 450.2 l1.2 -0.9 M198.4 484.4 l1.7 -1.1 M210.8 478.5 l0.7 0.1 M190.1 438.5 l0.4 -0.9 M217.1 471.1 l1.7 1.6 M217.0 465.0 l-1.9 1.0 M187.9 450.6 l0.7 0.1 M197.6 483.8 l0.4 -0.6 M191.1 479.8 l-0.1 1.1 M195.1 445.3 l0.1 1.3 M206.1 479.9 l-1.8 -0.9 M186.0 438.6 l1.9 1.4 M188.6 452.1 l-1.5 0.2 M212.3 454.8 l1.2 0.5 M198.0 480.7 l1.7 -0.5 M216.9 476.1 l-1.0 -0.1 M207.5 481.1 l1.2 0.7 M184.7 440.2 l1.5 -1.3 M207.9 478.5 l1.8 0.3 M203.6 478.1 l-1.0 -1.3 M211.1 455.5 l-0.5 -0.4 M217.7 461.9 l-0.2 0.9 M188.4 448.9 l-1.2 0.3 M193.6 447.1 l0.8 1.8 M197.5 479.4 l0.3 -0.9 M189.7 436.2 l-0.1 -0.5 M187.9 453.7 l-0.7 1.1 M199.7 478.4 l1.3 0.2 M190.4 472.3 l0.7 1.8 M188.6 448.4 l-1.3 0.8 M191.2 480.0 l-0.7 -0.3 M189.4 465.4 l1.8 -0.4 M211.9 474.4 l-0.8 0.7 M207.2 476.9 l-0.9 1.0 M219.5 470.0 l0.1 -1.5 M193.5 444.2 l-1.7 0.9 M210.6 453.7 l-0.9 -0.5 M211.8 453.4 l-0.7 -0.4 M195.1 479.0 l-1.6 -0.9 M185.0 440.9 l1.1 0.9 M188.4 444.8 l-0.3 1.0 M213.6 473.9 l0.4 -1.4 M196.9 445.1 l0.1 0.3 M189.1 448.0 l1.1 -1.9 M208.5 450.6 l1.4 -0.1 M188.7 462.5 l-1.9 0.0 M203.6 484.9 l1.6 -1.5 M212.7 467.4 l-1.8 -0.6 M190.3 439.0 l0.2 1.7 M193.9 480.3 l0.8 -1.5 M215.3 466.3 l1.7 0.9 M210.6 452.9 l1.2 1.7 M215.5 457.7 l1.0 -0.1 M185.4 437.2 l-1.7 -1.2 M187.4 460.9 l0.8 0.1 M211.3 455.9 l-1.3 1.6 M209.8 454.1 l-0.5 0.1 M204.9 446.6 l-2.0 -1.2 M199.4 445.2 l-1.2 -1.3 M197.1 443.8 l-1.9 -1.6 M187.7 460.5 l-1.8 -1.9 M189.8 439.9 l-0.1 -1.3 M186.0 437.7 l0.9 -0.9 M212.5 459.2 l1.7 -0.8 M191.0 448.8 l1.3 0.5 M194.8 439.9 l0.7 1.9 M187.8 436.9 l-1.8 0.6 M192.7 479.2 l-1.5 -0.4 M210.6 473.2 l1.3 0.2 M212.2 460.0 l-0.9 -1.3 M200.5 443.0 l0.8 -1.9 M206.7 480.7 l1.5 -0.2 M216.9 473.1 l-0.7 -0.5 M190.6 437.5 l-1.4 0.6"/>
<ellipse class="w" cx="200.300" cy="462" rx="10.500" ry="14.800" transform="rotate(-18 200.300 462)" stroke-width="1.200"/>
<path class="l" d="M194 451 Q203 452 207.500 462 Q210 470 207 475.500"/>
<ellipse class="w" cx="185.3" cy="439.3" rx="1.300" ry="2" transform="rotate(-18 185.3 439.3)"/>
<ellipse class="w" cx="216.5" cy="467.5" rx="1.300" ry="2" transform="rotate(-18 216.5 467.5)"/>
<ellipse class="w" cx="195.0" cy="482.5" rx="1.300" ry="2" transform="rotate(-18 195.0 482.5)"/>
<path class="l" d="M220 477 L263.200 453 M232 470 L243.800 462 L266 449"/>
<path class="l" d="M243.800 451 L248 449 L246.900 436.100 L241.500 432.800"/>
<path class="t" d="M251 437.500 Q247.500 445 250 456"/>
<path class="w" d="M277.300 427.600 Q269 430.500 266.500 438 Q264 446 266 452 Q268 457.500 271.400 458.400 Q278 455 281 447 Q284 440 283.200 436 Z"/>
<path class="t" d="M276.500 430.500 Q271 433 269 439 Q267 447 269.500 453.500"/>
<ellipse class="w" cx="271.400" cy="457.800" rx="2.500" ry="2" stroke-width="1.200"/>
<ellipse class="w" cx="283.400" cy="435.500" rx="2.300" ry="2.800" stroke-width="1.200"/>
<ellipse class="w" cx="288.600" cy="433" rx="2.800" ry="3.300" stroke-width="1.200"/>
<path class="l" d="M263.200 453 L270 458.500 M283 447 L287 442 L294 432.500 L296.200 419.500 L292 412"/>
<path class="w" d="M227.400 419.300 L230.700 409 Q232.500 404 237.700 403.100 L262 396 L284 392.500 Q291 393 292.500 399 L292 412 L291.900 414 L250.800 436.800 L246.900 436.100 L241.500 432.800 L236.500 429 Z"/>
<path class="l" d="M231.200 410.700 L245.800 420.400 L244.700 431.800 M236.100 405.800 L251.200 417.200 L255.500 416.600 L288 401"/>
<path class="l" d="M246.500 435.700 L290.800 411.900"/>
<path d="M248.500 436.200 L291.500 413" fill="none" stroke="#111" stroke-width="1.800" stroke-dasharray="0.700 0.900"/>
<path class="l" d="M257.500 414.500 L279 404.500 M257.500 414.500 L258.500 418 L260.500 415.500 L262.500 417 L262 412.500 M269 409 L268.500 405.500 M278 405 L277 400"/>
<g transform="translate(229.800 427.500) rotate(-8)"><path class="w" d="M-6 -3.300 L-6 4 L-2.500 6.500 L3 6.500 L6 4 L6 -3.300 Z" stroke-width="1.300"/><path class="l" d="M-2.500 -0.500 V6.500 M3 -0.500 V6.500" stroke-width="0.800"/><ellipse class="w" cx="0" cy="-3.300" rx="6" ry="3.300" stroke-width="1.300"/><ellipse class="k" cx="0" cy="-3.300" rx="3.200" ry="1.700"/><ellipse cx="0.3" cy="-3" rx="1.500" ry="0.800" fill="#fff"/></g>
<path class="w" d="M281.500 383.200 Q282.500 380 285.800 380 L291.200 383.200 Q297 385.500 304.200 392 Q309 398 309.600 405 L309.600 417.300 Q308 422.500 302 423 Q296 421.500 296.200 419.500 L292 412 L292.500 399 Q291 394 285 392.500 Z"/>
<path class="l" d="M286 384.500 Q294 388 298 395.700 Q301 402 300.500 411 Q301.500 415.500 305.500 415"/>
<ellipse class="w" cx="304" cy="414.500" rx="2.800" ry="3.400" stroke-width="1.200"/>
<g transform="translate(307.500 385.500) rotate(25)"><path class="w" d="M-6.500 -3.500 L-6.500 7 L-4 10.500 L4 10.500 L6.500 7 L6.500 -3.500 Z" stroke-width="1.300"/><path class="l" d="M-6.500 2.500 Q0 5.500 6.500 2.500 M-6.500 4.500 Q0 7.500 6.500 4.500 M-6.500 6.500 Q0 9.500 6.500 6.500"/><ellipse class="w" cx="0" cy="-3.500" rx="6.500" ry="4.300" stroke-width="1.400"/><ellipse class="l" cx="0" cy="-3.500" rx="3.800" ry="2.400" stroke-width="1.300"/><ellipse class="k" cx="0.3" cy="-3.300" rx="1.600" ry="1"/></g>
<path class="l" d="M298.500 395 L297.500 407 L300.500 411"/>
<path d="M287 386 L291.500 381.500 L297 378 L301 376.500" fill="none" stroke="#111" stroke-width="2.400" stroke-dasharray="1.500 1.100"/>
<ellipse class="w" cx="287.500" cy="386.500" rx="2.300" ry="1.500" transform="rotate(-35 287.500 386.500)" stroke-width="1.200"/>
<g transform="translate(291.9 425.0) rotate(-20) scale(1.15)"><path class="w" d="M-4 -3 L-1.500 -4 L2 -4 L4 -2.500 L4 2.500 L2 4 L-1.500 4 L-4 3 Z" stroke-width="1.300"/><path class="t" d="M-1.500 -4 V4"/><ellipse class="w" cx="-4" cy="0" rx="1.800" ry="3" stroke-width="1.200"/></g>
<g transform="translate(300.5 426.5) rotate(-20) scale(0.95)"><path class="w" d="M-4 -3 L-1.500 -4 L2 -4 L4 -2.500 L4 2.500 L2 4 L-1.500 4 L-4 3 Z" stroke-width="1.300"/><path class="t" d="M-1.500 -4 V4"/><ellipse class="w" cx="-4" cy="0" rx="1.800" ry="3" stroke-width="1.200"/></g>
<g transform="translate(303.5 419.0) rotate(-30) scale(0.90)"><path class="w" d="M-4 -3 L-1.500 -4 L2 -4 L4 -2.500 L4 2.500 L2 4 L-1.500 4 L-4 3 Z" stroke-width="1.300"/><path class="t" d="M-1.500 -4 V4"/><ellipse class="w" cx="-4" cy="0" rx="1.800" ry="3" stroke-width="1.200"/></g>
<g transform="translate(290.5 404.0) rotate(50) scale(0.80)"><path class="w" d="M-4 -3 L-1.500 -4 L2 -4 L4 -2.500 L4 2.500 L2 4 L-1.500 4 L-4 3 Z" stroke-width="1.300"/><path class="t" d="M-1.500 -4 V4"/><ellipse class="w" cx="-4" cy="0" rx="1.800" ry="3" stroke-width="1.200"/></g>
<g transform="translate(294.5 408.5) rotate(50) scale(0.80)"><path class="w" d="M-4 -3 L-1.500 -4 L2 -4 L4 -2.500 L4 2.500 L2 4 L-1.500 4 L-4 3 Z" stroke-width="1.300"/><path class="t" d="M-1.500 -4 V4"/><ellipse class="w" cx="-4" cy="0" rx="1.800" ry="3" stroke-width="1.200"/></g>
<g transform="translate(297.0 412.5) rotate(40) scale(0.70)"><path class="w" d="M-4 -3 L-1.500 -4 L2 -4 L4 -2.500 L4 2.500 L2 4 L-1.500 4 L-4 3 Z" stroke-width="1.300"/><path class="t" d="M-1.500 -4 V4"/><ellipse class="w" cx="-4" cy="0" rx="1.800" ry="3" stroke-width="1.200"/></g>
<g transform="translate(243.6 399.5) rotate(0)"><path class="w" d="M-4.0 0 L-4.0 6.0 L4.0 6.0 L4.0 0 Z" stroke-width="1.300"/><ellipse class="w" cx="0" cy="0" rx="4.0" ry="2.5" stroke-width="1.400"/><rect class="w" x="-1.300" y="-4" width="2.600" height="4" stroke-width="1.200"/><ellipse class="k" cx="0" cy="-4.300" rx="1.900" ry="1.300"/></g>
<g transform="translate(249.8 388.0) rotate(0)"><path class="w" d="M-3.2 0 L-3.2 7.0 L3.2 7.0 L3.2 0 Z" stroke-width="1.300"/><ellipse class="w" cx="0" cy="0" rx="3.2" ry="2.0" stroke-width="1.400"/><rect class="w" x="-1.300" y="-4" width="2.600" height="4" stroke-width="1.200"/><ellipse class="k" cx="0" cy="-4.300" rx="1.900" ry="1.300"/></g>
<g transform="translate(258.2 388.5) rotate(0)"><path class="w" d="M-3.8 0 L-3.8 7.0 L3.8 7.0 L3.8 0 Z" stroke-width="1.300"/><ellipse class="w" cx="0" cy="0" rx="3.8" ry="2.3" stroke-width="1.400"/><rect class="w" x="-1.300" y="-4" width="2.600" height="4" stroke-width="1.200"/><ellipse class="k" cx="0" cy="-4.300" rx="1.900" ry="1.300"/></g>
<g transform="translate(264.0 390.5) rotate(0)"><path class="w" d="M-3.0 0 L-3.0 6.0 L3.0 6.0 L3.0 0 Z" stroke-width="1.300"/><ellipse class="w" cx="0" cy="0" rx="3.0" ry="1.9" stroke-width="1.400"/><rect class="w" x="-1.300" y="-4" width="2.600" height="4" stroke-width="1.200"/><ellipse class="k" cx="0" cy="-4.300" rx="1.900" ry="1.300"/></g>
<g transform="translate(246.5 394.0) rotate(0)"><path class="w" d="M-2.8 0 L-2.8 5.0 L2.8 5.0 L2.8 0 Z" stroke-width="1.300"/><ellipse class="w" cx="0" cy="0" rx="2.8" ry="1.7" stroke-width="1.400"/><rect class="w" x="-1.300" y="-4" width="2.600" height="4" stroke-width="1.200"/><ellipse class="k" cx="0" cy="-4.300" rx="1.900" ry="1.300"/></g>
<g transform="translate(270.3 399.0) rotate(6)"><path class="w" d="M-3.0 0 L-3.0 8.0 L3.0 8.0 L3.0 0 Z" stroke-width="1.300"/><ellipse class="w" cx="0" cy="0" rx="3.0" ry="1.9" stroke-width="1.400"/><rect class="w" x="-1.300" y="-4" width="2.600" height="4" stroke-width="1.200"/><ellipse class="k" cx="0" cy="-4.300" rx="1.900" ry="1.300"/></g>
<g transform="translate(271.500 387) rotate(4)"><rect class="w" x="-4.800" y="-12" width="9.600" height="13" rx="1" stroke-width="1.300"/><ellipse class="w" cx="0" cy="-12" rx="4.800" ry="2.200" stroke-width="1.300"/><path class="l" d="M-4.800 -5 Q0 -3 4.800 -5"/><rect class="w" x="-1.800" y="-18" width="3.600" height="6" stroke-width="1.200"/><ellipse class="k" cx="0" cy="-14" rx="2.600" ry="1.500"/><ellipse class="w" cx="0" cy="-18.500" rx="2.600" ry="1.600" stroke-width="1.300"/><rect class="w" x="-1.200" y="-22" width="2.400" height="3" stroke-width="1.100"/><ellipse class="k" cx="0" cy="-22.300" rx="1.800" ry="1.200"/></g>
<path class="k" d="M260 391 L267 388.500 L274 391.500 L272 395.500 L266 397 L261 395 Z"/>
<path class="l" d="M253 392.500 L261 394.500 M249 395 L256 398 M264 396.500 L268 402 M256 391 L260 393"/>
<g transform="translate(327 422.500) rotate(20)"><path class="w" d="M-3.500 -3 L3.500 -3 L4.500 0 L3.500 3 L-3.500 3 L-4.500 0 Z"/><rect class="w" x="4.500" y="-1.500" width="4" height="3"/><rect class="w" x="-8" y="-1.500" width="3.500" height="3"/><path class="t" d="M-1.500 -3 V3 M1.500 -3 V3"/></g>
<path class="d" d="M228.700 471.700 V495 L239.200 489.200"/>
<path class="d" d="M194 488 L217 503"/>
<path class="d" d="M291.300 498 L268.700 515 L275 519.200"/>
<g transform="translate(244.500 485.800) rotate(-15)"><ellipse class="w" cx="2" rx="5.600" ry="8.300" stroke-width="1.200"/><ellipse class="w" cx="-1.500" rx="5.600" ry="8.300" stroke-width="1.200"/><ellipse class="l" cx="-1.300" rx="2.300" ry="3.200"/><path class="t" d="M-1.300 -3.200 L-1.300 3.200 M-3.500 0 H1"/></g>
<g transform="translate(205 512) rotate(-28.500)"><rect class="w" x="-14.500" y="-3.600" width="29" height="7.200" rx="1.500"/><path class="t" d="M1 -3.600 V3.600 M3 -3.600 V3.600 M5 -3.600 V3.600 M7 -3.600 V3.600 M9 -3.600 V3.600 M11 -3.600 V3.600 M13 -3.600 V3.600"/><ellipse class="l" cx="-13" cy="0" rx="1.500" ry="3.500"/></g>
<g transform="translate(303.300 466)"><ellipse class="w" cx="0" cy="3.400" rx="8.300" ry="4.200" stroke-width="1.200"/><ellipse class="w" cx="0" cy="2" rx="8.300" ry="4.200"/><path class="w" d="M-6 -3 L-6 1.500 L-3 3.800 L3 3.800 L6 1.500 L6 -3 Z"/><path class="t" d="M-3 -0.500 V3.800 M3 -0.500 V3.800"/><path class="w" d="M-6 -3 L-3 -5.500 L3 -5.500 L6 -3 L3 -0.500 L-3 -0.500 Z"/><ellipse class="l" cx="0" cy="-3" rx="2.800" ry="1.500"/></g>
<path class="w" d="M277.500 484.200 L288.300 478.300 L294.200 477.500 L303.300 473.300 Q308 472.500 310.500 475.500 Q312.500 478 311 480.500 L302.500 487.500 L288.300 488.300 L282.500 496.700 L279.200 496.700 L277 492.500 Z"/>
<path class="l" d="M277.500 484.200 L281 486.500 L281.500 495 M281 486.500 L288.300 488.300"/>
<ellipse class="l" cx="305" cy="478.300" rx="4.300" ry="1.800" transform="rotate(-20 305 478.300)"/>
<ellipse class="l" cx="283.300" cy="492" rx="1.200" ry="1.800"/>
<path class="l" d="M273.300 488.300 L277 490"/>
<path class="w" d="M299.3 492.5 L299.3 512.0 L306.7 512.0 L306.7 492.5 Z"/>
<path class="t" style="stroke-width:0.95;stroke:#111" d="M299.3 493.9 L306.7 494.9 M299.3 495.9 L306.7 496.9 M299.3 497.9 L306.7 498.9 M299.3 499.8 L306.7 500.8 M299.3 501.8 L306.7 502.8 M299.3 503.7 L306.7 504.7 M299.3 505.6 L306.7 506.6 M299.3 507.6 L306.7 508.6 M299.3 509.6 L306.7 510.6"/>
<g transform="translate(302.900 514.500)"><path class="w" d="M-6 0 L-6 5.500 L-3 7.500 L3 7.500 L6 5.500 L6 0 Z"/><path class="t" d="M-3 3 V7.500 M3 3 V7.500"/><ellipse class="w" cx="0" cy="0" rx="8.500" ry="4.300" stroke-width="1.200"/><ellipse class="l" cx="0" cy="-0.800" rx="4" ry="1.800"/></g>
<path class="w" d="M299.3 500.0 L299.3 512.5 L306.7 512.5 L306.7 500.0 Z"/>
<path class="t" style="stroke-width:0.95;stroke:#111" d="M299.3 501.3 L306.7 502.3 M299.3 503.1 L306.7 504.1 M299.3 504.9 L306.7 505.9 M299.3 506.6 L306.7 507.6 M299.3 508.4 L306.7 509.4 M299.3 510.2 L306.7 511.2"/>
<path class="w" d="M315.9 482.0 L315.9 505.0 L322.5 505.0 L322.5 482.0 Z"/>
<path class="t" style="stroke-width:0.95;stroke:#111" d="M315.9 483.4 L322.5 484.4 M315.9 485.3 L322.5 486.3 M315.9 487.2 L322.5 488.2 M315.9 489.2 L322.5 490.2 M315.9 491.1 L322.5 492.1 M315.9 493.0 L322.5 494.0 M315.9 494.9 L322.5 495.9 M315.9 496.8 L322.5 497.8 M315.9 498.8 L322.5 499.8 M315.9 500.7 L322.5 501.7 M315.9 502.6 L322.5 503.6"/>
<ellipse class="w" cx="319.200" cy="482" rx="3.300" ry="1.300"/>
<path class="l" d="M315.900 505 Q319.200 507 322.500 505"/>
<path class="w" d="M274.0 522.0 L287.5 529.9 L290.5 524.7 L277.0 516.8 Z"/>
<path class="t" style="stroke-width:0.95;stroke:#111" d="M275.5 522.9 L279.4 518.2 M277.4 524.0 L281.3 519.3 M279.3 525.1 L283.2 520.4 M281.3 526.3 L285.2 521.6 M283.2 527.4 L287.1 522.7 M285.1 528.5 L289.0 523.8"/>
<g transform="translate(296 531.500) rotate(30)"><ellipse class="w" cx="-5" cy="0" rx="2.800" ry="7.600" stroke-width="1.200"/><path class="w" d="M-4 -6 L3 -6 L6.500 -3 L6.500 3 L3 6 L-4 6 Z"/><path class="t" d="M-4 -2.500 H6.500 M-4 2.500 H6.500"/><ellipse class="l" cx="3.500" cy="0" rx="3" ry="5.500"/></g>
<path class="w" d="M238.300 522.500 L248.300 516.700 L262.500 520.800 L260 527.500 L246.700 525 L240.800 545 L234.200 545.800 L233.300 541.700 Z"/>
<path class="l" d="M238.300 522.500 L241 525.500 L246.700 525 M241 525.500 L236.500 543.500"/>
<ellipse class="l" cx="255.300" cy="521.700" rx="1.800" ry="1.300" stroke-width="1.400"/>
<ellipse class="l" cx="238.500" cy="539.500" rx="1.500" ry="2.600" stroke-width="1.300"/>
<path class="t" d="M15 470.500 H69.600"/>
<path class="l" d="M75.300 460.700 V472.600 L64.200 480.100 L64.700 496"/>
<path class="g" d="M14 475 L62.700 499.500"/>
<path class="g" d="M27 487 Q29 491 32 490 Q31 494 34 495.500 M48 497 Q51 502 55 500.500"/>
<path class="l" d="M81.500 470.400 Q85 472 88.500 469.300 L100.400 467.700 Q104.500 466 103.600 461.200 Q103 458 100.900 456.400 M97.200 461.200 Q98 464 99.900 465"/>
<path class="l" d="M110.100 456.900 Q113.500 457.500 113.900 461.200 M109 453 Q114 452.500 116 457"/>
<path class="l" d="M120.100 455.600 L134.800 448.200 Q141 446 147.600 449.200 L156.800 457.400 L163.200 457.400 Q165.900 459 165.900 463.800 L167.800 495 L166.800 537 L171.400 544.400"/>
<path class="l" d="M120.100 455.600 L121 460.100 L139.400 473 Q144.500 479 145.800 489.500 L144.900 545.300 M117.400 453.700 L119.200 463.800 L136.600 475.700 Q141.500 482 142.500 491.300 L141.200 545.300"/>
<path class="l" d="M142.100 468.400 L156.800 458.300 M148.500 476.600 L165 467.500 M152.200 500.400 L165.900 493.100 M150.400 508.700 L166.800 499.500 M148 480.300 L149.500 545.300"/>
<path class="l" d="M150.400 533.400 L157.700 529.700 L159.500 538.900 M149.500 540.700 L166.800 538.400"/>
<path class="l" d="M71.200 482.300 L78.200 478.500 Q80 475.500 82 477.400 Q84 480.500 87.400 477.400 L96.100 475.800 L105.800 474.200 L111.200 479.600 L112.300 488.200"/>
<path class="l" d="M95.900 476.400 L95.500 487.200 M97.700 476.400 L98.800 488.200 Q103 489 106.900 490.400 Q112 493 115.500 496.900 Q120 502 122 508.800"/>
<path class="l" d="M65.800 486 L69 484.500 L70.100 490.400 M75.500 488.200 L82 485.500 M69.500 479.500 Q72 483.500 76 482"/>
<path class="l" d="M92.800 490.400 Q96 490.500 97.200 492.600 L98.200 495.800"/>
<path class="l" d="M116.500 478.500 Q119 475.500 123.800 475.700 Q130 478 133.900 484 Q139 491 139.400 498.600 Q138.500 502.500 135.700 504.100 L129.300 507.800 M117.400 493.100 L116.500 478.500 M119.500 480 L120.500 493"/>
<path class="l" d="M110.3 474.6 a2.3 2.3 0 1 1 3.2 0.0"/>
<path class="l" d="M109.4 460.8 a2.3 2.3 0 1 1 3.2 0.0"/>
<path class="l" d="M132.0 512.4 a2.7 2.7 0 1 1 3.8 0.0"/>
<path class="l" d="M122.2 521.3 a2.3 2.3 0 1 1 3.2 0.0"/>
<path class="l" d="M136.6 539.9 a2.7 2.7 0 1 1 3.8 0.0"/>
<path class="l" d="M130.200 509.600 L132 518.800 L139.400 517.800 L139.400 529.700 M127.500 526 L128.400 544.400 M133.900 526 L134.800 542.600 M130 522 L137 521"/>
<path class="l" d="M104 490 Q112 494 116.500 500.400 Q122 508 122.900 516.900 Q123 527 117.400 535.200"/>
<path class="l" d="M117.400 535.200 L113 545"/>
<path d="M85.6 490.2 L89.1 489.0 L92.7 488.8 L96.5 489.6 L100.2 491.5 L103.7 494.2 L107.0 497.8 L110.0 502.1 L112.5 507.0 L114.5 512.4 L115.9 518.0 L116.7 523.8 L116.9 529.6 L116.4 535.1 L115.3 540.2 L113.5 544.7 L111.3 548.6 L108.5 551.6 L105.4 553.8 L101.9 555.0 L98.3 555.2 L85.3 557.8 L81.5 557.0 L77.8 555.1 L74.3 552.4 L71.0 548.8 L68.0 544.5 L65.5 539.6 L63.5 534.2 L62.1 528.6 L61.3 522.8 L61.1 517.0 L61.6 511.5 L62.7 506.4 L64.5 501.9 L66.7 498.0 L69.5 495.0 L72.6 492.8 Z" fill="#fff" stroke="#111" stroke-width="1"/>
<path d="M85.6 490.2 L87.3 489.5 L89.1 489.0 L90.9 488.8 L92.7 488.8 L94.6 489.1 L96.5 489.6 L98.3 490.4 L100.2 491.5 L102.0 492.7 L103.7 494.2 L105.4 495.9 L107.0 497.8 L108.5 499.8 L110.0 502.1 L111.3 504.5 L112.5 507.0 L113.6 509.6 L114.5 512.4 L115.3 515.2 L115.9 518.0 L116.4 520.9 L116.7 523.8 L116.9 526.7 L116.9 529.6 L116.7 532.3 L116.4 535.1 L115.9 537.7 L115.3 540.2 L114.5 542.5 L113.5 544.7 L112.5 546.7 L111.3 548.6 L109.9 550.2 L108.5 551.6 L107.0 552.8 L105.4 553.8 L103.7 554.5 L101.9 555.0 L100.1 555.2 L98.3 555.2" fill="none" stroke="#111" stroke-width="1.100"/>
<path d="M77.5 491.4 L90.5 488.8 M80.7 491.5 L93.7 488.9 M83.9 492.4 L96.9 489.8 M87.1 494.0 L100.1 491.4 M90.2 496.3 L103.2 493.7 M93.1 499.2 L106.1 496.6 M95.7 502.7 L108.7 500.1 M98.1 506.7 L111.1 504.1 M100.1 511.1 L113.1 508.5 M101.7 515.7 L114.7 513.1 M102.9 520.6 L115.9 518.0 M103.6 525.6 L116.6 523.0 M103.9 530.6 L116.9 528.0 M103.7 535.4 L116.7 532.8 M103.0 540.0 L116.0 537.4 M101.8 544.2 L114.8 541.6 M100.2 548.0 L113.2 545.4 M98.2 551.2 L111.2 548.6 M95.9 553.9 L108.9 551.3 M93.2 555.9 L106.2 553.3 M90.3 557.2 L103.3 554.6" fill="none" stroke="#111" stroke-width="1.500"/>
<g transform="translate(82.5 524.6) rotate(-11)"><ellipse rx="21.800" ry="34.600" fill="none" stroke="#111" stroke-width="2.400" stroke-dasharray="2 2.100"/><ellipse rx="20.500" ry="33.300" fill="#fff" stroke="#111" stroke-width="1.100"/><ellipse rx="16.800" ry="27.500" cx="-0.500" cy="0.500" fill="none" stroke="#111" stroke-width="1.100"/><path d="M-15.500 -12 A16.800 27.500 0 0 0 -3 27" fill="none" stroke="#333" stroke-width="0.700" transform="translate(1.300 0)"/></g>
<path class="w" d="M73.600 515.600 L81.600 511 L87.600 511.600 L99.600 527.600 L99.600 533 L93.600 538.300 L86.300 538.300 L75 528 Z"/>
<path class="l" d="M87.600 511.600 L87.800 516 L96.500 528.500 L96.500 535.500 M96.500 528.500 L99.600 527.600"/>
<g transform="translate(81.500 526.300) rotate(-11)"><ellipse class="w" rx="8" ry="11.800" stroke-width="1.600"/><ellipse class="l" rx="6" ry="9.300" cx="0.800" stroke-width="0.900"/><ellipse class="w" rx="3.600" ry="5.800" cx="2" stroke-width="1.300"/></g>
<ellipse class="l" cx="74.300" cy="509" rx="1.500" ry="2.300" transform="rotate(-30 74.300 509)" stroke-width="1.300"/>
<ellipse class="l" cx="97" cy="542.300" rx="1.500" ry="2.300" transform="rotate(-20 97 542.300)" stroke-width="1.300"/>
<path class="w" d="M24.6 543.3 L48.6 529.8 L45.4 524.2 L21.4 537.7 Z"/>
<path class="t" style="stroke-width:0.95;stroke:#111" d="M26.0 542.5 L23.7 536.4 M27.8 541.5 L25.6 535.4 M29.7 540.4 L27.4 534.4 M31.5 539.4 L29.3 533.3 M33.4 538.3 L31.1 532.3 M35.2 537.3 L32.9 531.2 M37.1 536.3 L34.8 530.2 M38.9 535.2 L36.6 529.2 M40.7 534.2 L38.5 528.1 M42.6 533.1 L40.3 527.1 M44.4 532.1 L42.2 526.0 M46.3 531.1 L44.0 525.0"/>
<g transform="translate(19 543.300) rotate(-29)"><path class="w" d="M-6 -4 L-3.500 -6 L3 -6 L5.500 -4 L5.500 4 L3 6 L-3.500 6 L-6 4 Z"/><path class="t" d="M-3.500 -6 V6 M-6 -2 H-3.500 M-6 2 H-3.500"/><ellipse class="l" cx="-1" cy="0" rx="3.500" ry="5.200"/></g>
<g transform="translate(53 521) rotate(-15)"><ellipse class="w" rx="5.800" ry="8.300" stroke-width="1.300"/><ellipse class="w" rx="5.800" ry="8.300" cx="-1.300" stroke-width="1"/><ellipse class="l" rx="2" ry="3" cx="-1" stroke-width="1.200"/></g>
<g transform="translate(48.400 546) rotate(-15)"><path class="w" d="M-5.500 -3.500 L-1.500 -7 L3.500 -5.500 L5.500 0 L3.500 5.500 L-1.500 7 L-5.500 3.500 Z" stroke-width="1.300"/><ellipse class="w" rx="3.300" ry="4.800" cx="-0.800" stroke-width="1.200"/><ellipse class="l" rx="1.600" ry="2.600" cx="-0.500"/></g>
<g transform="translate(59 541) rotate(-15)"><ellipse rx="4.300" ry="5.800" fill="#fff" stroke="#111" stroke-width="1.500"/><ellipse rx="2" ry="3.200" fill="#fff" stroke="#111" stroke-width="1.200"/><path d="M1 -1 L6 -2 L6 1.500 L1 1.500 Z" fill="#fff"/></g>
<rect x="134.6" y="143.3" width="12.9" height="10.8" fill="#ffff00"/>
<text x="141.0" y="152.1" font-size="9.300" text-anchor="middle" fill="#000">32</text>
<rect x="71.5" y="172.0" width="12.9" height="10.8" fill="#ffff00"/>
<text x="78.0" y="180.8" font-size="9.300" text-anchor="middle" fill="#000">34</text>
<rect x="101.5" y="172.8" width="12.9" height="10.8" fill="#ffff00"/>
<text x="108.0" y="181.6" font-size="9.300" text-anchor="middle" fill="#000">30</text>
<rect x="177.1" y="167.1" width="12.9" height="10.8" fill="#ffff00"/>
<text x="183.5" y="175.9" font-size="9.300" text-anchor="middle" fill="#000">33</text>
<rect x="173.1" y="181.6" width="12.9" height="10.8" fill="#ffff00"/>
<text x="179.5" y="190.4" font-size="9.300" text-anchor="middle" fill="#000">39</text>
<rect x="115.5" y="211.6" width="12.9" height="10.8" fill="#ffff00"/>
<text x="122.0" y="220.4" font-size="9.300" text-anchor="middle" fill="#000">38</text>
<rect x="67.5" y="227.0" width="12.9" height="10.8" fill="#ffff00"/>
<text x="74.0" y="235.8" font-size="9.300" text-anchor="middle" fill="#000">31</text>
<rect x="134.4" y="239.0" width="12.9" height="10.8" fill="#ffff00"/>
<text x="140.8" y="247.8" font-size="9.300" text-anchor="middle" fill="#000">16</text>
<rect x="255.6" y="185.6" width="12.9" height="10.8" fill="#ffff00"/>
<text x="262.0" y="194.4" font-size="9.300" text-anchor="middle" fill="#000">18</text>
<rect x="218.2" y="236.1" width="12.9" height="10.8" fill="#ffff00"/>
<text x="224.7" y="244.9" font-size="9.300" text-anchor="middle" fill="#000">22</text>
<rect x="114.8" y="245.6" width="12.9" height="10.8" fill="#ffff00"/>
<text x="121.2" y="254.4" font-size="9.300" text-anchor="middle" fill="#000">15</text>
<rect x="155.6" y="255.1" width="12.9" height="10.8" fill="#ffff00"/>
<text x="162.0" y="263.9" font-size="9.300" text-anchor="middle" fill="#000">29</text>
<rect x="12.6" y="300.1" width="12.9" height="10.8" fill="#ffff00"/>
<text x="19.0" y="308.9" font-size="9.300" text-anchor="middle" fill="#000">26</text>
<rect x="160.2" y="321.1" width="12.9" height="10.8" fill="#ffff00"/>
<text x="166.6" y="329.9" font-size="9.300" text-anchor="middle" fill="#000">35</text>
<rect x="105.8" y="338.1" width="12.9" height="10.8" fill="#ffff00"/>
<text x="112.2" y="346.9" font-size="9.300" text-anchor="middle" fill="#000">19</text>
<rect x="12.2" y="350.2" width="12.9" height="10.8" fill="#ffff00"/>
<text x="18.6" y="359.0" font-size="9.300" text-anchor="middle" fill="#000">27</text>
<rect x="179.4" y="256.6" width="12.9" height="10.8" fill="#ffff00"/>
<text x="185.8" y="265.4" font-size="9.300" text-anchor="middle" fill="#000">21</text>
<rect x="294.1" y="324.6" width="7.8" height="10.8" fill="#ffff00"/>
<text x="298.0" y="333.4" font-size="9.300" text-anchor="middle" fill="#000">6</text>
<rect x="323.1" y="335.2" width="7.8" height="10.8" fill="#ffff00"/>
<text x="327.0" y="344.0" font-size="9.300" text-anchor="middle" fill="#000">5</text>
<rect x="274.1" y="338.9" width="7.8" height="10.8" fill="#ffff00"/>
<text x="278.0" y="347.7" font-size="9.300" text-anchor="middle" fill="#000">4</text>
<rect x="47.3" y="382.1" width="12.9" height="10.8" fill="#ffff00"/>
<text x="53.8" y="390.9" font-size="9.300" text-anchor="middle" fill="#000">28</text>
<rect x="117.3" y="354.3" width="12.9" height="10.8" fill="#ffff00"/>
<text x="123.8" y="363.1" font-size="9.300" text-anchor="middle" fill="#000">20</text>
<rect x="284.2" y="443.6" width="12.9" height="10.8" fill="#ffff00"/>
<text x="290.7" y="452.4" font-size="9.300" text-anchor="middle" fill="#000">13</text>
<rect x="262.6" y="462.0" width="12.9" height="10.8" fill="#ffff00"/>
<text x="269.0" y="470.8" font-size="9.300" text-anchor="middle" fill="#000">11</text>
<rect x="48.0" y="558.1" width="12.9" height="10.8" fill="#ffff00"/>
<text x="54.5" y="566.9" font-size="9.300" text-anchor="middle" fill="#000">36</text>
<rect x="64.3" y="555.4" width="12.9" height="10.8" fill="#ffff00"/>
<text x="70.8" y="564.2" font-size="9.300" text-anchor="middle" fill="#000">37</text>
<rect x="115.0" y="555.6" width="12.9" height="10.8" fill="#ffff00"/>
<text x="121.5" y="564.4" font-size="9.300" text-anchor="middle" fill="#000">10</text>
<rect x="254.5" y="495.2" width="7.8" height="10.8" fill="#ffff00"/>
<text x="258.4" y="504.0" font-size="9.300" text-anchor="middle" fill="#000">9</text>
<rect x="224.8" y="512.9" width="7.8" height="10.8" fill="#ffff00"/>
<text x="228.7" y="521.7" font-size="9.300" text-anchor="middle" fill="#000">7</text>
<rect x="203.1" y="525.4" width="7.8" height="10.8" fill="#ffff00"/>
<text x="207.0" y="534.2" font-size="9.300" text-anchor="middle" fill="#000">8</text>
<rect x="313.6" y="527.4" width="12.9" height="10.8" fill="#ffff00"/>
<text x="320.0" y="536.2" font-size="9.300" text-anchor="middle" fill="#000">12</text>
<rect x="271.6" y="542.1" width="12.9" height="10.8" fill="#ffff00"/>
<text x="278.0" y="550.9" font-size="9.300" text-anchor="middle" fill="#000">14</text>
<rect x="226.3" y="188.6" width="11.8" height="10.8" fill="#f4807e"/>
<text x="232.2" y="197.4" font-size="9.300" text-anchor="middle" fill="#000">17</text>
<rect x="66.3" y="310.3" width="12.8" height="10.8" fill="#00e000"/>
<text x="72.7" y="319.1" font-size="9.300" text-anchor="middle" fill="#000">23</text>
<rect x="320.3" y="451.6" width="7.4" height="10.8" fill="#00e000"/>
<text x="324.0" y="460.4" font-size="9.300" text-anchor="middle" fill="#000">1</text>
<text x="53.7" y="298.1" font-size="9.300" text-anchor="middle" fill="#000">24</text>
<text x="53.7" y="356.4" font-size="9.300" text-anchor="middle" fill="#000">25</text>
<text x="308.8" y="445.2" font-size="9.300" text-anchor="middle" fill="#000">2</text>
<text x="327.5" y="439.4" font-size="9.300" text-anchor="middle" fill="#666">3</text>

</svg>
<div id="tb"><div id="tbi"></div>
<svg width="44" height="170" viewBox="5 22 44 170" style="position:absolute;left:-1px;top:-1px">
<defs><linearGradient id="bg" x1="0" y1="0" x2="0" y2="1"><stop offset="0" stop-color="#f4f4f4"/><stop offset="1" stop-color="#c8c8c8"/></linearGradient></defs>
<g stroke="#8a8a8a" stroke-width="1" fill="url(#bg)">
<path d="M19.5 34.5h13l3.5 7.2l-3.5 7.3h-13z" stroke="none" fill="#e6e6e6"/>
<rect x="19.5" y="34.5" width="14" height="14"/>
<path d="M34 57.5h-13l-3.5 7.2l3.5 7.3h13z" stroke="none" fill="#e6e6e6"/>
<rect x="19.5" y="57.5" width="14" height="14"/>
<rect x="19.5" y="86.5" width="14" height="14"/>
<rect x="19.5" y="109.5" width="14" height="14"/>
</g>
<g stroke="#555" stroke-width="2" fill="none"><path d="M22 41.5h9M26.5 37v9"/><path d="M22 64.500h9"/></g>
<g fill="#8a8a8a" stroke="#6a6a6a" stroke-width="0.6"><rect x="21.500" y="88.500" width="3" height="3"/><rect x="28.500" y="88.500" width="3" height="3"/><rect x="21.500" y="95.500" width="3" height="3"/><rect x="28.500" y="95.500" width="3" height="3"/></g>
<rect x="23.500" y="113.500" width="6" height="6" fill="#d8d8d8" stroke="#555" stroke-width="1"/>
<defs><linearGradient id="fg" x1="0" y1="0" x2="1" y2="0"><stop offset="0" stop-color="#e4e4e4"/><stop offset="1" stop-color="#a9a9a9"/></linearGradient><linearGradient id="fw" x1="0" y1="0" x2="1" y2="0"><stop offset="0" stop-color="#fff"/><stop offset="1" stop-color="#a9a9a9"/></linearGradient></defs>
<rect x="24" y="162.700" width="11.500" height="14.300" fill="url(#fg)"/>
<path d="M24.500 177V163.200H35" fill="none" stroke="url(#fw)" stroke-width="1"/><path d="M24.500 176.600H33" fill="none" stroke="url(#fw)" stroke-width="0.800"/>
<g fill="#d6d6d6" stroke="#f4f4f4" stroke-width="0.900"><rect x="18.900" y="163.100" width="3.900" height="3.700"/><rect x="18.900" y="168.100" width="3.900" height="3.700"/><rect x="18.900" y="173.100" width="3.900" height="3.700"/></g>
<path d="M18.300 162.600h5v14.700h-5z" fill="none" stroke="#8e8e8e" stroke-width="0.600"/>
<path d="M26 170h6.500" stroke="#444" stroke-width="1.800" fill="none"/><path d="M31.800 166.900l3.400 3.100l-3.400 3.100z" fill="#444"/>
</svg>
</div>
</div>
<div id="rp"></div>
<div id="hd">
<div class="h" style="left:0;width:79px"><svg style="position:absolute;left:27px;top:1px" width="18" height="18" viewBox="0 0 18 18"><rect x="0.500" y="1.500" width="12" height="12" fill="#fff" stroke="#1f6fb5" stroke-width="1"/><rect x="0.500" y="1.500" width="12" height="1.800" fill="#1f6fb5"/><path d="M2 6h2M2 8.500h2M2 11h2" stroke="#4a6a90" stroke-width="1"/><circle cx="9" cy="9.300" r="4.300" fill="#d9dde2" stroke="#a3acb8" stroke-width="1"/><path d="M12.300 12.600l3.600 3.600" stroke="#3f76b5" stroke-width="1.900"/></svg></div>
<div class="h" style="left:80px;width:64px;letter-spacing:-0.380px">Symbol(s)</div>
<div class="h" style="left:145px;width:34px;letter-spacing:0.000px">Item</div>
<div class="h" style="left:180px;width:83px;letter-spacing:-0.210px">Parts No.</div>
<div class="h" style="left:264px;width:34px;letter-spacing:0.120px">Qty.</div>
<div class="h" style="left:299px;width:83px;letter-spacing:-0.130px">Latest Part No.</div>
<div class="h" style="left:383px;width:122px;letter-spacing:0.220px">Description</div>
<div class="h" style="left:506px;width:51px;letter-spacing:0.240px">Cut Out</div>
<div class="h" style="left:558px;width:41px;letter-spacing:0.070px">Cut In</div>
<div class="h" style="left:600px;width:121px;letter-spacing:0.000px">Comment</div>
</div>
<div class="r" style="top:42px"><div class="c c0"><svg class="ic gear"><use href="#i-gear"/></svg><svg class="ic cart"><use href="#i-cart"/></svg><svg class="ic info"><use href="#i-info"/></svg></div><div class="c c1"></div><div class="c c2"><span style="letter-spacing:-0.117px">10</span></div><div class="c c3"><span style="letter-spacing:-0.140px">3117L052</span></div><div class="c c4"><span style="letter-spacing:-0.117px">1</span></div><div class="c c5"><span style="letter-spacing:-0.140px">3117L052</span></div><div class="c c6"><span style="letter-spacing:-0.532px">FUEL INJECTION PUMP (</span></div><div class="c c7"></div><div class="c c8"></div><div class="c c9"></div></div>
<div class="r" style="top:62px"><div class="c c0"><svg class="ic gear"><use href="#i-gear"/></svg><svg class="ic cart"><use href="#i-cart"/></svg><svg class="ic info"><use href="#i-info"/></svg></div><div class="c c1"></div><div class="c c2"><span style="letter-spacing:0.291px">11</span></div><div class="c c3"><span style="letter-spacing:-0.270px">3645E008</span></div><div class="c c4"><span style="letter-spacing:-0.117px">1</span></div><div class="c c5"><span style="letter-spacing:-0.270px">3645E008</span></div><div class="c c6"><span style="letter-spacing:-0.994px">BRACKET</span></div><div class="c c7"></div><div class="c c8"></div><div class="c c9"></div></div>
<div class="r" style="top:82px"><div class="c c0"><svg class="ic gear"><use href="#i-gear"/></svg><svg class="ic cart"><use href="#i-cart"/></svg><svg class="ic info"><use href="#i-info"/></svg></div><div class="c c1"></div><div class="c c2"><span style="letter-spacing:-0.117px">12</span></div><div class="c c3"><span style="letter-spacing:-0.096px">2314H003</span></div><div class="c c4"><span style="letter-spacing:-0.117px">1</span></div><div class="c c5"><span style="letter-spacing:-0.096px">2314H003</span></div><div class="c c6"><span style="letter-spacing:-0.989px">SCREW</span></div><div class="c c7"></div><div class="c c8"></div><div class="c c9"></div></div>
<div class="r" style="top:102px"><div class="c c0"><svg class="ic gear"><use href="#i-gear"/></svg><svg class="ic cart"><use href="#i-cart"/></svg><svg class="ic info"><use href="#i-info"/></svg></div><div class="c c1"></div><div class="c c2"><span style="letter-spacing:-0.117px">13</span></div><div class="c c3"><span style="letter-spacing:-0.145px">2318A603</span></div><div class="c c4"><span style="letter-spacing:-0.117px">1</span></div><div class="c c5"><span style="letter-spacing:-0.145px">2318A603</span></div><div class="c c6"><span style="letter-spacing:-0.202px">NUT</span></div><div class="c c7"></div><div class="c c8"></div><div class="c c9"></div></div>
<div class="r" style="top:122px"><div class="c c0"><svg class="ic gear"><use href="#i-gear"/></svg><svg class="ic cart"><use href="#i-cart"/></svg><svg class="ic info"><use href="#i-info"/></svg></div><div class="c c1"></div><div class="c c2"><span style="letter-spacing:-0.117px">14</span></div><div class="c c3"><span style="letter-spacing:-0.290px">2314J002</span></div><div class="c c4"><span style="letter-spacing:-0.117px">1</span></div><div class="c c5"><span style="letter-spacing:-0.290px">2314J002</span></div><div class="c c6"><span style="letter-spacing:-0.989px">SCREW</span></div><div class="c c7"></div><div class="c c8"></div><div class="c c9"></div></div>
<div class="r" style="top:142px"><div class="c c0"><svg class="ic gear"><use href="#i-gear"/></svg><svg class="ic cart"><use href="#i-cart"/></svg><svg class="ic info"><use href="#i-info"/></svg></div><div class="c c1"><svg class="ic cyl"><use href="#i-cyl"/></svg></div><div class="c c2"><span style="letter-spacing:-0.117px">15</span></div><div class="c c3"><span style="letter-spacing:-0.270px">3521K124</span></div><div class="c c4"><span style="letter-spacing:-0.117px">1</span></div><div class="c c5"><span style="letter-spacing:-0.270px">3521K124</span></div><div class="c c6"><span style="letter-spacing:-0.681px">FUEL INJECTION PIPE</span></div><div class="c c7"></div><div class="c c8"><span style="letter-spacing:-0.088px">U67976</span></div><div class="c c9"></div></div>
<div class="r" style="top:162px"><div class="c c0"><svg class="ic gear"><use href="#i-gear"/></svg><svg class="ic cart"><use href="#i-cart"/></svg><svg class="ic info"><use href="#i-info"/></svg></div><div class="c c1"><svg class="ic bk"><use href="#i-bk"/></svg><svg class="ic cyl"><use href="#i-cyl"/></svg></div><div class="c c2"><span style="letter-spacing:-0.117px">15</span></div><div class="c c3"><span style="letter-spacing:-0.221px">2646C167</span></div><div class="c c4"><span style="letter-spacing:-0.117px">1</span></div><div class="c c5"><span style="letter-spacing:-0.221px">2646C167</span></div><div class="c c6"><span style="letter-spacing:-0.681px">FUEL INJECTION PIPE</span></div><div class="c c7"><span style="letter-spacing:-0.248px">U679765Y</span></div><div class="c c8"></div><div class="c c9"></div></div>
<div class="r" style="top:182px"><div class="c c0"><svg class="ic gear"><use href="#i-gear"/></svg><svg class="ic cart"><use href="#i-cart"/></svg><svg class="ic info"><use href="#i-info"/></svg></div><div class="c c1"><svg class="ic cyl"><use href="#i-cyl"/></svg></div><div class="c c2"><span style="letter-spacing:-0.117px">16</span></div><div class="c c3"><span style="letter-spacing:-0.270px">3521K125</span></div><div class="c c4"><span style="letter-spacing:-0.117px">1</span></div><div class="c c5"><span style="letter-spacing:-0.270px">3521K125</span></div><div class="c c6"><span style="letter-spacing:-0.681px">FUEL INJECTION PIPE</span></div><div class="c c7"></div><div class="c c8"><span style="letter-spacing:-0.088px">U67976</span></div><div class="c c9"></div></div>
<div class="r" style="top:202px"><div class="c c0"><svg class="ic gear"><use href="#i-gear"/></svg><svg class="ic cart"><use href="#i-cart"/></svg><svg class="ic info"><use href="#i-info"/></svg></div><div class="c c1"><svg class="ic bk"><use href="#i-bk"/></svg><svg class="ic cyl"><use href="#i-cyl"/></svg></div><div class="c c2"><span style="letter-spacing:-0.117px">16</span></div><div class="c c3"><span style="letter-spacing:-0.221px">2646C168</span></div><div class="c c4"><span style="letter-spacing:-0.117px">1</span></div><div class="c c5"><span style="letter-spacing:-0.221px">2646C168</span></div><div class="c c6"><span style="letter-spacing:-0.681px">FUEL INJECTION PIPE</span></div><div class="c c7"><span style="letter-spacing:-0.248px">U679765Y</span></div><div class="c c8"></div><div class="c c9"></div></div>
<div class="r" style="top:222px"><div class="c c0"><svg class="ic gear"><use href="#i-gear"/></svg><svg class="ic cart"><use href="#i-cart"/></svg><svg class="ic info"><use href="#i-info"/></svg></div><div class="c c1"><svg class="ic cyl"><use href="#i-cyl"/></svg></div><div class="c c2"><span style="letter-spacing:-0.117px">17</span></div><div class="c c3"><span style="letter-spacing:-0.270px">3521K126</span></div><div class="c c4"><span style="letter-spacing:-0.117px">1</span></div><div class="c c5"><span style="letter-spacing:-0.270px">3521K126</span></div><div class="c c6"><span style="letter-spacing:-0.681px">FUEL INJECTION PIPE</span></div><div class="c c7"></div><div class="c c8"></div><div class="c c9"></div></div>
<div class="r sel" style="top:242px"><div class="c c0"><svg class="ic gear"><use href="#i-gear"/></svg><svg class="ic cart"><use href="#i-carts"/></svg><svg class="ic info"><use href="#i-info"/></svg></div><div class="c c1"><svg class="ic bk"><use href="#i-bk"/></svg><svg class="ic cyl"><use href="#i-cyl"/></svg></div><div class="c c2"><span style="letter-spacing:-0.117px">17</span></div><div class="c c3"><span style="letter-spacing:-0.221px">2646C157</span></div><div class="c c4"><span style="letter-spacing:-0.117px">1</span></div><div class="c c5"><span style="letter-spacing:-0.221px">2646C157</span></div><div class="c c6"><span style="letter-spacing:-0.681px">FUEL INJECTION PIPE</span></div><div class="c c7"><span style="letter-spacing:-0.248px">U679765Y</span></div><div class="c c8"></div><div class="c c9"></div></div>
<div class="r" style="top:262px"><div class="c c0"><svg class="ic gear"><use href="#i-gear"/></svg><svg class="ic cart"><use href="#i-cart"/></svg><svg class="ic info"><use href="#i-info"/></svg></div><div class="c c1"><svg class="ic cyl"><use href="#i-cyl"/></svg></div><div class="c c2"><span style="letter-spacing:-0.117px">18</span></div><div class="c c3"><span style="letter-spacing:-0.270px">3521K127</span></div><div class="c c4"><span style="letter-spacing:-0.117px">1</span></div><div class="c c5"><span style="letter-spacing:-0.270px">3521K127</span></div><div class="c c6"><span style="letter-spacing:-0.681px">FUEL INJECTION PIPE</span></div><div class="c c7"></div><div class="c c8"><span style="letter-spacing:-0.088px">U67976</span></div><div class="c c9"></div></div>
<div class="r" style="top:282px"><div class="c c0"><svg class="ic gear"><use href="#i-gear"/></svg><svg class="ic cart"><use href="#i-cart"/></svg><svg class="ic info"><use href="#i-info"/></svg></div><div class="c c1"><svg class="ic bk"><use href="#i-bk"/></svg><svg class="ic cyl"><use href="#i-cyl"/></svg></div><div class="c c2"><span style="letter-spacing:-0.117px">18</span></div><div class="c c3"><span style="letter-spacing:-0.221px">2646C158</span></div><div class="c c4"><span style="letter-spacing:-0.117px">1</span></div><div class="c c5"><span style="letter-spacing:-0.221px">2646C158</span></div><div class="c c6"><span style="letter-spacing:-0.681px">FUEL INJECTION PIPE</span></div><div class="c c7"><span style="letter-spacing:-0.248px">U679765Y</span></div><div class="c c8"></div><div class="c c9"></div></div>
<div class="r" style="top:302px"><div class="c c0"><svg class="ic gear"><use href="#i-gear"/></svg><svg class="ic cart"><use href="#i-cart"/></svg><svg class="ic info"><use href="#i-info"/></svg></div><div class="c c1"></div><div class="c c2"><span style="letter-spacing:-0.117px">19</span></div><div class="c c3"><span style="letter-spacing:-0.270px">2646E017</span></div><div class="c c4"><span style="letter-spacing:-0.117px">2</span></div><div class="c c5"><span style="letter-spacing:-0.270px">2646E017</span></div><div class="c c6"><span style="letter-spacing:-0.864px">CLIP</span></div><div class="c c7"></div><div class="c c8"></div><div class="c c9"></div></div>
<div class="r" style="top:322px"><div class="c c0"><svg class="ic gear"><use href="#i-gear"/></svg><svg class="ic cart"><use href="#i-cart"/></svg><svg class="ic info"><use href="#i-info"/></svg></div><div class="c c1"><svg class="ic nt"><use href="#i-nt"/></svg></div><div class="c c2"><span style="letter-spacing:-0.117px">20</span></div><div class="c c3"><span style="letter-spacing:-0.221px">2314C035</span></div><div class="c c4"><span style="letter-spacing:-0.117px">2</span></div><div class="c c5"><span style="letter-spacing:-0.221px">2314C035</span></div><div class="c c6"><span style="letter-spacing:-0.989px">SCREW</span></div><div class="c c7"></div><div class="c c8"></div><div class="c c9"></div></div>
<div class="r" style="top:342px"><div class="c c0"><svg class="ic gear"><use href="#i-gear"/></svg><svg class="ic cart"><use href="#i-cart"/></svg><svg class="ic info"><use href="#i-info"/></svg></div><div class="c c1"></div><div class="c c2"><span style="letter-spacing:-0.117px">21</span></div><div class="c c3"><span style="letter-spacing:-0.270px">2646E019</span></div><div class="c c4"><span style="letter-spacing:-0.117px">1</span></div><div class="c c5"><span style="letter-spacing:-0.270px">2646E019</span></div><div class="c c6"><span style="letter-spacing:-0.864px">CLIP</span></div><div class="c c7"></div><div class="c c8"></div><div class="c c9"></div></div>
<div class="r" style="top:362px"><div class="c c0"><svg class="ic gear"><use href="#i-gear"/></svg><svg class="ic cart"><use href="#i-cart"/></svg><svg class="ic info"><use href="#i-info"/></svg></div><div class="c c1"><svg class="ic nt"><use href="#i-nt"/></svg></div><div class="c c2"><span style="letter-spacing:-0.117px">22</span></div><div class="c c3"><span style="letter-spacing:-0.221px">2314C035</span></div><div class="c c4"><span style="letter-spacing:-0.117px">1</span></div><div class="c c5"><span style="letter-spacing:-0.221px">2314C035</span></div><div class="c c6"><span style="letter-spacing:-0.989px">SCREW</span></div><div class="c c7"></div><div class="c c8"></div><div class="c c9"></div></div>
<div class="r" style="top:382px"><div class="c c0"><svg class="ic gear2"><use href="#i-gear2"/></svg><svg class="ic cart"><use href="#i-cart"/></svg><svg class="ic info"><use href="#i-info"/></svg></div><div class="c c1"><svg class="ic ga"><use href="#i-ga"/></svg></div><div class="c c2"><span style="letter-spacing:-0.117px">23</span></div><div class="c c3"><span style="letter-spacing:-0.145px">2645A017</span></div><div class="c c4"><span style="letter-spacing:-0.117px">4</span></div><div class="c c5"><span style="letter-spacing:-0.145px">2645A017</span></div><div class="c c6"><span style="letter-spacing:-0.725px">INJECTOR</span></div><div class="c c7"></div><div class="c c8"></div><div class="c c9"></div></div>
<div class="r" style="top:402px"><div class="c c0"><svg class="ic gear"><use href="#i-gear"/></svg><svg class="ic cart"><use href="#i-cart"/></svg><svg class="ic info"><use href="#i-info"/></svg></div><div class="c c1"><svg class="ic br"><use href="#i-br"/></svg></div><div class="c c2"><span style="letter-spacing:-0.390px">(23)</span></div><div class="c c3"><span style="letter-spacing:-0.234px">2645A017R</span></div><div class="c c4"><span style="letter-spacing:-0.117px">4</span></div><div class="c c5"><span style="letter-spacing:-0.234px">2645A017R</span></div><div class="c c6"><span style="letter-spacing:-0.595px">INJECTOR - EXCHANGE</span></div><div class="c c7"></div><div class="c c8"></div><div class="c c9"></div></div>
<div class="r" style="top:422px"><div class="c c0"><svg class="ic gear"><use href="#i-gear"/></svg><svg class="ic cart"><use href="#i-cart"/></svg><svg class="ic info"><use href="#i-info"/></svg></div><div class="c c1"></div><div class="c c2"><span style="letter-spacing:-0.117px">26</span></div><div class="c c3"><span style="letter-spacing:-0.117px">33813129</span></div><div class="c c4"><span style="letter-spacing:-0.117px">4</span></div><div class="c c5"><span style="letter-spacing:-0.117px">33813129</span></div><div class="c c6"><span style="letter-spacing:-0.904px">SPACER</span></div><div class="c c7"></div><div class="c c8"></div><div class="c c9"></div></div>
<div class="r" style="top:442px"><div class="c c0"><svg class="ic gear"><use href="#i-gear"/></svg><svg class="ic cart"><use href="#i-cart"/></svg><svg class="ic info"><use href="#i-s"/></svg><svg class="ic info i2"><use href="#i-info"/></svg></div><div class="c c1"></div><div class="c c2"><span style="letter-spacing:-0.117px">27</span></div><div class="c c3"><span style="letter-spacing:-0.117px">33813131</span></div><div class="c c4"><span style="letter-spacing:-0.117px">4</span></div><div class="c c5"><span style="letter-spacing:-0.043px">3311A042</span></div><div class="c c6"><span style="letter-spacing:-1.032px">SEAL</span></div><div class="c c7"></div><div class="c c8"></div><div class="c c9"></div></div>
<div class="r" style="top:462px"><div class="c c0"><svg class="ic gear"><use href="#i-gear"/></svg><svg class="ic cart"><use href="#i-cart"/></svg><svg class="ic info"><use href="#i-info"/></svg></div><div class="c c1"></div><div class="c c2"><span style="letter-spacing:-0.117px">28</span></div><div class="c c3"><span style="letter-spacing:-0.001px">0921173</span></div><div class="c c4"><span style="letter-spacing:-0.117px">4</span></div><div class="c c5"><span style="letter-spacing:-0.001px">0921173</span></div><div class="c c6"><span style="letter-spacing:-0.649px">INJECTOR WASHER</span></div><div class="c c7"></div><div class="c c8"></div><div class="c c9"></div></div>
<div class="r" style="top:482px"><div class="c c0"><svg class="ic gear"><use href="#i-gear"/></svg><svg class="ic cart"><use href="#i-cart"/></svg><svg class="ic book2"><use href="#i-book2"/></svg><svg class="ic info i2"><use href="#i-info"/></svg></div><div class="c c1"></div><div class="c c2"><span style="letter-spacing:-0.117px">29</span></div><div class="c c3"><span style="letter-spacing:-0.096px">2314H006</span></div><div class="c c4"><span style="letter-spacing:-0.117px">8</span></div><div class="c c5"><span style="letter-spacing:-0.096px">2314H006</span></div><div class="c c6"><span style="letter-spacing:-0.729px">BOLT</span></div><div class="c c7"></div><div class="c c8"></div><div class="c c9"></div></div>
<div class="r" style="top:502px"><div class="c c0"><svg class="ic gear"><use href="#i-gear"/></svg><svg class="ic cart"><use href="#i-cart"/></svg><svg class="ic info"><use href="#i-info"/></svg></div><div class="c c1"></div><div class="c c2"><span style="letter-spacing:-0.117px">30</span></div><div class="c c3"><span style="letter-spacing:-0.270px">3558X019</span></div><div class="c c4"><span style="letter-spacing:-0.117px">1</span></div><div class="c c5"><span style="letter-spacing:-0.270px">3558X019</span></div><div class="c c6"><span style="letter-spacing:-0.802px">PIPE - LEAK OFF</span></div><div class="c c7"></div><div class="c c8"></div><div class="c c9"></div></div>
<div class="r" style="top:522px"><div class="c c0"><svg class="ic gear"><use href="#i-gear"/></svg><svg class="ic cart"><use href="#i-cart"/></svg><svg class="ic info"><use href="#i-info"/></svg></div><div class="c c1"></div><div class="c c2"><span style="letter-spacing:-0.117px">31</span></div><div class="c c3"><span style="letter-spacing:0.006px">2411D007</span></div><div class="c c4"><span style="letter-spacing:-0.117px">3</span></div><div class="c c5"><span style="letter-spacing:0.006px">2411D007</span></div><div class="c c6"><span style="letter-spacing:-0.646px">WASHER</span></div><div class="c c7"></div><div class="c c8"><span style="letter-spacing:-0.088px">U56130</span></div><div class="c c9"></div></div>
<div class="r" style="top:542px"><div class="c c0"><svg class="ic gear"><use href="#i-gear"/></svg><svg class="ic cart"><use href="#i-cart"/></svg><svg class="ic info"><use href="#i-info"/></svg></div><div class="c c1"><svg class="ic bk"><use href="#i-bk"/></svg></div><div class="c c2"><span style="letter-spacing:-0.117px">31</span></div><div class="c c3"><span style="letter-spacing:-0.096px">2415D052</span></div><div class="c c4"><span style="letter-spacing:-0.117px">3</span></div><div class="c c5"><span style="letter-spacing:-0.096px">2415D052</span></div><div class="c c6"><span style="letter-spacing:-0.646px">WASHER</span></div><div class="c c7"><span style="letter-spacing:-0.248px">U561307K</span></div><div class="c c8"></div><div class="c c9"></div></div>
<div class="r" style="top:562px"><div class="c c0"><svg class="ic gear"><use href="#i-gear"/></svg><svg class="ic cart"><use href="#i-cart"/></svg><svg class="ic info"><use href="#i-info"/></svg></div><div class="c c1"><svg class="ic bk"><use href="#i-bk"/></svg></div><div class="c c2"><span style="letter-spacing:-0.117px">31</span></div><div class="c c3"><span style="letter-spacing:-0.001px">0921176</span></div><div class="c c4"><span style="letter-spacing:-0.117px">3</span></div><div class="c c5"><span style="letter-spacing:-0.001px">0921176</span></div><div class="c c6"><span style="letter-spacing:-0.646px">WASHER</span></div><div class="c c7"></div><div class="c c8"></div><div class="c c9"></div></div>
<div class="r" style="top:582px"><div class="c c0"><svg class="ic gear"><use href="#i-gear"/></svg><svg class="ic cart"><use href="#i-cart"/></svg><svg class="ic info"><use href="#i-info"/></svg></div><div class="c c1"></div><div class="c c2"><span style="letter-spacing:-0.117px">32</span></div><div class="c c3"><span style="letter-spacing:0.006px">2411D007</span></div><div class="c c4"><span style="letter-spacing:-0.117px">3</span></div><div class="c c5"><span style="letter-spacing:0.006px">2411D007</span></div><div class="c c6"><span style="letter-spacing:-0.646px">WASHER</span></div><div class="c c7"></div><div class="c c8"><span style="letter-spacing:-0.088px">U56130</span></div><div class="c c9"></div></div>
<div id="logo">
<svg width="43" height="59" viewBox="1028 542 43 59">
<g fill="none" stroke="#1a5a9e" stroke-width="2.600">
<circle cx="1039.600" cy="561.100" r="6.800"/><circle cx="1056.400" cy="561.100" r="6.800"/>
<circle cx="1039.600" cy="578" r="6.800"/><circle cx="1056.400" cy="578" r="6.800"/>
<path d="M1035 565.700l9.200-9.200M1061 565.700l-9.200-9.200M1035 573.400l9.200 9.200M1061 573.400l-9.200 9.200"/>
</g>
<path d="M1047.850 552.500l2.500 5q-2.500 2-2.500 4.500q0-2.500-2.500-4.500zM1047.850 586.500l2.500-5q-2.500-2-2.500-4.500q0 2.500-2.500 4.500zM1031.500 569.500l5-2.500q2 2.500 4.500 2.500q-2.500 0-4.500 2.500zM1064.200 569.500l-5-2.500q-2 2.500-4.500 2.500q2.500 0 4.500 2.500z" fill="#1a5a9e"/>
<text x="1030.300" y="598" font-size="10" font-weight="bold" fill="#1a5a9e" font-family="Liberation Sans, sans-serif" letter-spacing="-0.550" textLength="35.500" lengthAdjust="spacingAndGlyphs">Perkins</text>
<text x="1064.800" y="593" font-size="3" fill="#1a5a9e" font-family="Liberation Sans, sans-serif">®</text>
</svg>
</div>
</body></html>
